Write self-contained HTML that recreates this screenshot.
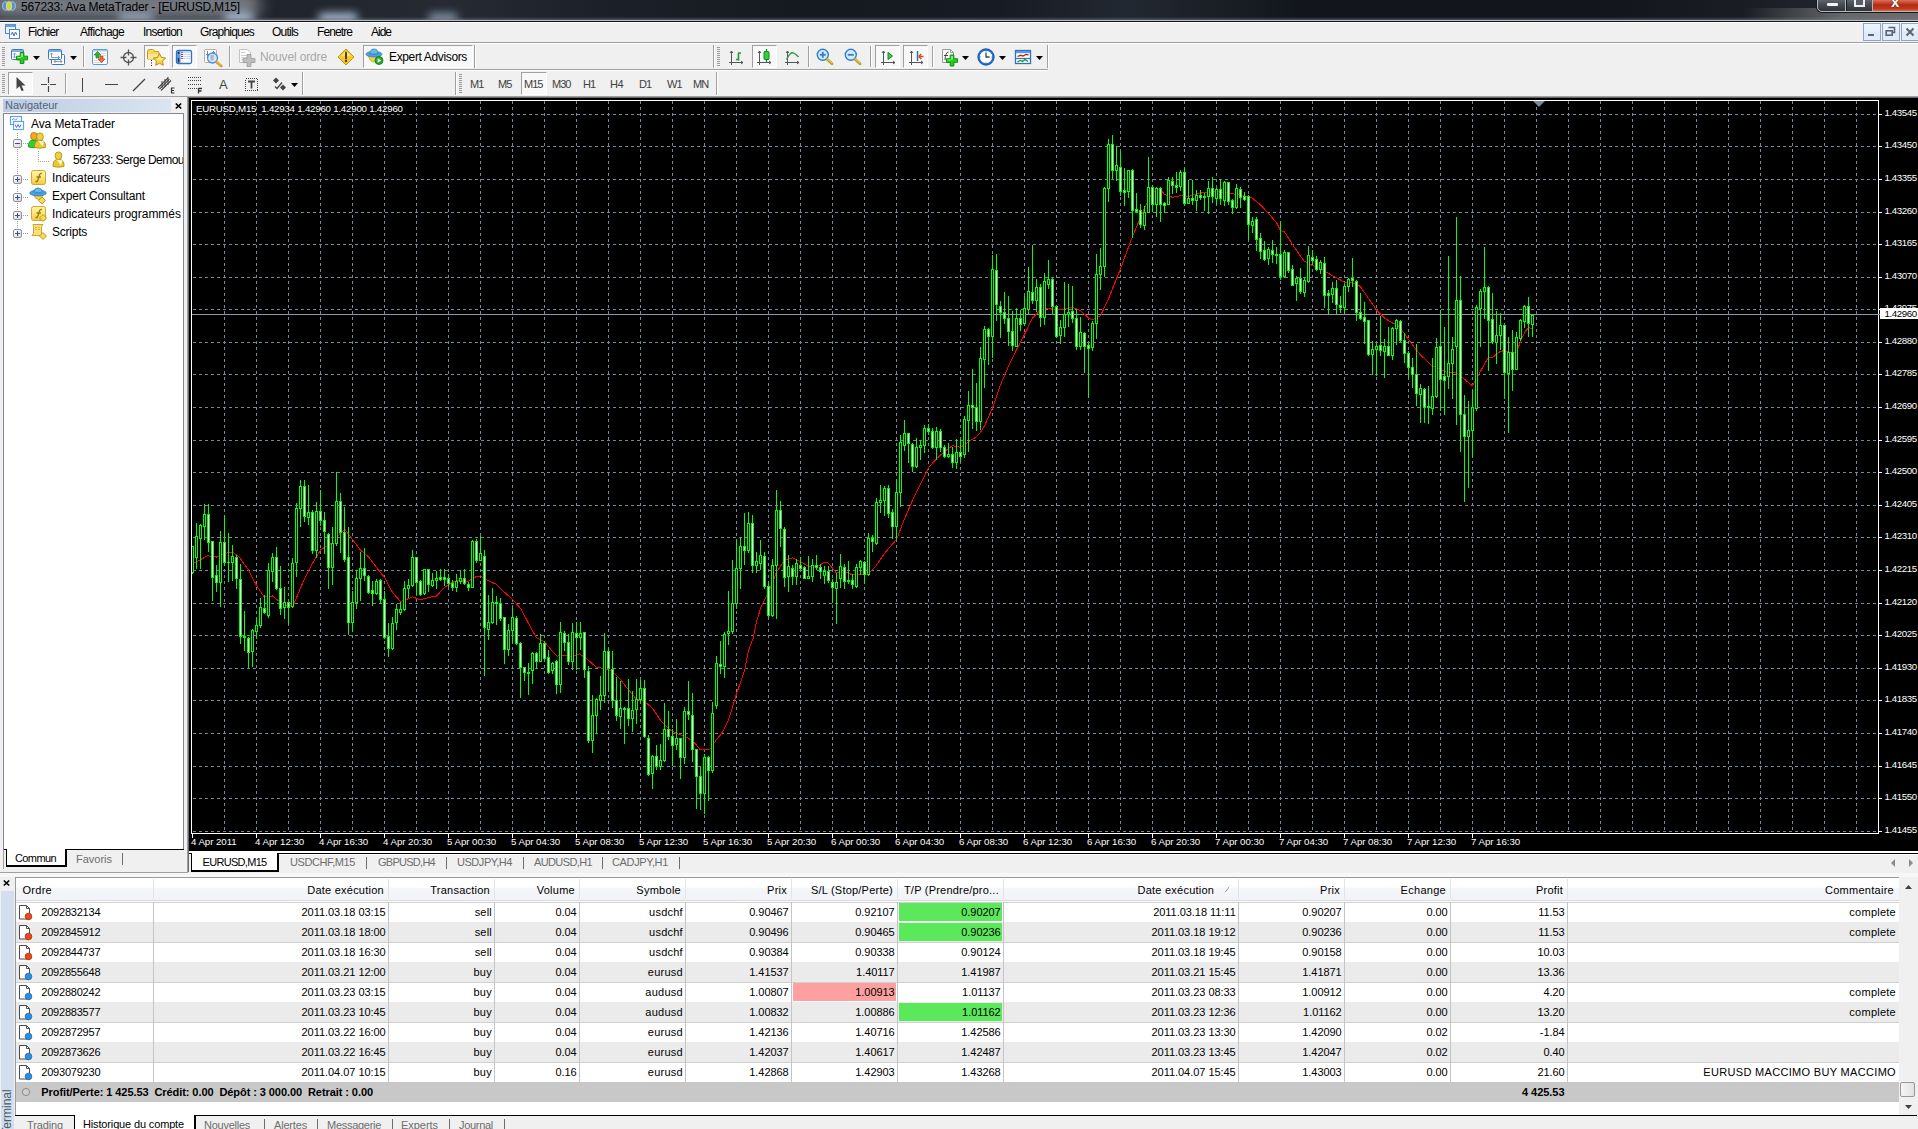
<!DOCTYPE html>
<html><head><meta charset="utf-8"><title>567233: Ava MetaTrader - [EURUSD,M15]</title>
<style>
html,body{margin:0;padding:0;}
body{width:1918px;height:1129px;overflow:hidden;position:relative;background:#f0f0f0;font-family:"Liberation Sans",sans-serif;}
.t{position:absolute;white-space:pre;display:block;}
.r{position:absolute;}
svg{position:absolute;overflow:visible;}
</style></head><body>
<div class="r" style="left:0;top:0;width:1918px;height:20px;background:linear-gradient(90deg,#20242b 0,#20252d 280px,#252a33 450px,#1c2129 600px,#151a21 800px,#171c24 1000px,#222831 1130px,#12161c 1300px,#12151b 1600px,#1a1d23 1750px,#2a2d33 1918px);"></div>
<div class="r" style="left:1700px;top:8px;width:218px;height:12px;background:linear-gradient(100deg,rgba(255,255,255,0) 20%,rgba(255,255,255,.3) 65%,rgba(255,255,255,.3) 100%);"></div>
<div class="r" style="left:-10px;top:-8px;width:270px;height:26px;background:rgba(215,220,228,.5);filter:blur(8px);border-radius:10px;"></div>
<div class="r" style="left:118px;top:13px;width:36px;height:10px;background:rgba(190,215,240,0.6);filter:blur(4px);border-radius:6px;"></div>
<div class="r" style="left:224px;top:13px;width:30px;height:10px;background:rgba(190,215,240,0.8);filter:blur(4px);border-radius:6px;"></div>
<div class="r" style="left:318px;top:13px;width:40px;height:10px;background:rgba(190,215,240,0.85);filter:blur(4px);border-radius:6px;"></div>
<div class="r" style="left:428px;top:13px;width:30px;height:10px;background:rgba(190,215,240,0.6);filter:blur(4px);border-radius:6px;"></div>
<div class="r" style="left:0;top:17px;width:1918px;height:3px;background:linear-gradient(180deg,rgba(90,95,100,0),rgba(120,125,130,.55));"></div>
<div class="r" style="left:0px;top:20px;width:1918px;height:1px;background:#b9bcc0;"></div>
<div class="r" style="left:0px;top:21px;width:1918px;height:1px;background:#14171b;"></div>
<div class="r" style="left:0px;top:22px;width:1918px;height:1px;background:#fff;"></div>
<svg style="left:2px;top:1px" width="14" height="10" viewBox="0 0 18 12" preserveAspectRatio="none"><ellipse cx="5" cy="6" rx="4.2" ry="5" fill="#5b8fc7" stroke="#bcd4ee" stroke-width="1"/><ellipse cx="13" cy="6" rx="4.2" ry="5" fill="#5b8fc7" stroke="#bcd4ee" stroke-width="1"/><ellipse cx="9" cy="6" rx="3.4" ry="5.2" fill="#c9d84a" stroke="#e8f0b0" stroke-width=".8"/></svg>
<span class="t" style="top:-1.2px;line-height:16px;font-size:12px;color:#000;letter-spacing:-0.192px;left:21.0px;">567233: Ava MetaTrader - [EURUSD,M15]</span>
<div class="r" style="left:1817px;top:-6px;width:110px;height:18px;border:1px solid #b4b8bd;box-shadow:0 0 0 1px #16181c;border-radius:0 0 0 5px;background:linear-gradient(180deg,#7b7f86,#4b4f57 55%,#30343b);box-sizing:border-box;"></div>
<div class="r" style="left:1845px;top:0px;width:1px;height:11px;background:#b4b8bd;"></div>
<div class="r" style="left:1846px;top:0px;width:1px;height:11px;background:#16181c;"></div>
<div class="r" style="left:1872px;top:0px;width:1px;height:11px;background:#b4b8bd;"></div>
<div class="r" style="left:1873px;top:0;width:45px;height:11px;background:linear-gradient(180deg,#d9705c,#b42a12 45%,#c03a1c 80%,#d8694a);"></div>
<div class="r" style="left:1827px;top:3px;width:11px;height:3px;background:#f4f4f4;border-radius:1px;"></div>
<div class="r" style="left:1854px;top:-3px;width:7px;height:6px;border:2px solid #f0f0f0;background:#5a5e66;"></div>
<span class="t" style="top:-8.0px;line-height:19px;font-size:15px;color:#fff;font-weight:bold;letter-spacing:1.200px;left:1891.0px;text-shadow:0 0 1px #402018,0 0 1px #402018;">x</span>
<div class="r" style="left:0px;top:23px;width:1918px;height:20px;background:#f0f0f0;"></div>
<div class="r" style="left:0px;top:42px;width:1918px;height:1px;background:#a0a0a0;"></div>
<div class="r" style="left:0px;top:43px;width:1918px;height:1px;background:#ffffff;"></div>
<svg style="left:4px;top:23px" width="17" height="17" viewBox="0 0 17 17"><rect x="1.5" y="1.5" width="10" height="9" fill="#eaf2fb" stroke="#4f86c6"/><rect x="1.5" y="1.5" width="10" height="2.5" fill="#6ea0d8"/><rect x="5.5" y="6.5" width="10" height="9" fill="#fff" stroke="#4f86c6"/><path d="M7 12 l1.5-3 1.5 4 1.5-4 1.5 3" fill="none" stroke="#3a6fb0" stroke-width="1"/></svg>
<span class="t" style="top:23.8px;line-height:16px;font-size:12px;color:#000;letter-spacing:-0.787px;left:28.0px;">Fichier</span>
<span class="t" style="top:23.8px;line-height:16px;font-size:12px;color:#000;letter-spacing:-0.646px;left:80.0px;">Affichage</span>
<span class="t" style="top:23.8px;line-height:16px;font-size:12px;color:#000;letter-spacing:-0.781px;left:143.0px;">Insertion</span>
<span class="t" style="top:23.8px;line-height:16px;font-size:12px;color:#000;letter-spacing:-0.804px;left:200.0px;">Graphiques</span>
<span class="t" style="top:23.8px;line-height:16px;font-size:12px;color:#000;letter-spacing:-0.779px;left:272.0px;">Outils</span>
<span class="t" style="top:23.8px;line-height:16px;font-size:12px;color:#000;letter-spacing:-0.908px;left:317.0px;">Fenetre</span>
<span class="t" style="top:23.8px;line-height:16px;font-size:12px;color:#000;letter-spacing:-1.000px;left:371.0px;">Aide</span>
<div class="r" style="left:1863px;top:23px;width:18px;height:18px;box-sizing:border-box;border:1px solid #8fa6c4;background:linear-gradient(180deg,#ecf4fc 0,#e6f0fa 45%,#dce9f7 50%,#e0ecf9 100%);"></div>
<div class="r" style="left:1882px;top:23px;width:18px;height:18px;box-sizing:border-box;border:1px solid #8fa6c4;background:linear-gradient(180deg,#ecf4fc 0,#e6f0fa 45%,#dce9f7 50%,#e0ecf9 100%);"></div>
<div class="r" style="left:1901px;top:23px;width:18px;height:18px;box-sizing:border-box;border:1px solid #8fa6c4;background:linear-gradient(180deg,#ecf4fc 0,#e6f0fa 45%,#dce9f7 50%,#e0ecf9 100%);"></div>
<div class="r" style="left:1868px;top:34px;width:6px;height:2px;background:#5a6472;"></div>
<svg style="left:1885px;top:26px" width="11" height="11" viewBox="0 0 11 11"><path d="M3.5 1.5h6v5h-2" fill="none" stroke="#5a6472" stroke-width="1.6"/><rect x="1.2" y="4.8" width="6" height="4.4" fill="none" stroke="#5a6472" stroke-width="1.6"/></svg>
<svg style="left:1905px;top:27px" width="10" height="10" viewBox="0 0 10 10"><path d="M1.5 1.5l7 7M8.5 1.5l-7 7" stroke="#5a6472" stroke-width="2"/></svg>
<div class="r" style="left:0px;top:69px;width:1048px;height:1px;background:#a0a0a0;"></div>
<div class="r" style="left:0px;top:70px;width:1049px;height:1px;background:#ffffff;"></div>
<div class="r" style="left:0px;top:96px;width:1918px;height:1px;background:#a0a0a0;"></div>
<div class="r" style="left:2px;top:47px;width:3px;height:1px;background:#9a9a9a;"></div>
<div class="r" style="left:2px;top:49px;width:3px;height:1px;background:#9a9a9a;"></div>
<div class="r" style="left:2px;top:51px;width:3px;height:1px;background:#9a9a9a;"></div>
<div class="r" style="left:2px;top:53px;width:3px;height:1px;background:#9a9a9a;"></div>
<div class="r" style="left:2px;top:55px;width:3px;height:1px;background:#9a9a9a;"></div>
<div class="r" style="left:2px;top:57px;width:3px;height:1px;background:#9a9a9a;"></div>
<div class="r" style="left:2px;top:59px;width:3px;height:1px;background:#9a9a9a;"></div>
<div class="r" style="left:2px;top:61px;width:3px;height:1px;background:#9a9a9a;"></div>
<div class="r" style="left:2px;top:63px;width:3px;height:1px;background:#9a9a9a;"></div>
<div class="r" style="left:2px;top:65px;width:3px;height:1px;background:#9a9a9a;"></div>
<div class="r" style="left:717px;top:47px;width:3px;height:1px;background:#9a9a9a;"></div>
<div class="r" style="left:717px;top:49px;width:3px;height:1px;background:#9a9a9a;"></div>
<div class="r" style="left:717px;top:51px;width:3px;height:1px;background:#9a9a9a;"></div>
<div class="r" style="left:717px;top:53px;width:3px;height:1px;background:#9a9a9a;"></div>
<div class="r" style="left:717px;top:55px;width:3px;height:1px;background:#9a9a9a;"></div>
<div class="r" style="left:717px;top:57px;width:3px;height:1px;background:#9a9a9a;"></div>
<div class="r" style="left:717px;top:59px;width:3px;height:1px;background:#9a9a9a;"></div>
<div class="r" style="left:717px;top:61px;width:3px;height:1px;background:#9a9a9a;"></div>
<div class="r" style="left:717px;top:63px;width:3px;height:1px;background:#9a9a9a;"></div>
<div class="r" style="left:717px;top:65px;width:3px;height:1px;background:#9a9a9a;"></div>
<div class="r" style="left:83px;top:46px;width:1px;height:21px;background:#a0a0a0;"></div>
<div class="r" style="left:84px;top:46px;width:1px;height:21px;background:#ffffff;"></div>
<div class="r" style="left:229px;top:46px;width:1px;height:21px;background:#a0a0a0;"></div>
<div class="r" style="left:230px;top:46px;width:1px;height:21px;background:#ffffff;"></div>
<div class="r" style="left:474px;top:45px;width:1px;height:23px;background:#a0a0a0;"></div>
<div class="r" style="left:475px;top:45px;width:1px;height:23px;background:#ffffff;"></div>
<div class="r" style="left:713px;top:45px;width:1px;height:23px;background:#a0a0a0;"></div>
<div class="r" style="left:714px;top:45px;width:1px;height:23px;background:#ffffff;"></div>
<div class="r" style="left:808px;top:46px;width:1px;height:21px;background:#a0a0a0;"></div>
<div class="r" style="left:809px;top:46px;width:1px;height:21px;background:#ffffff;"></div>
<div class="r" style="left:870px;top:46px;width:1px;height:21px;background:#a0a0a0;"></div>
<div class="r" style="left:871px;top:46px;width:1px;height:21px;background:#ffffff;"></div>
<div class="r" style="left:932px;top:46px;width:1px;height:21px;background:#a0a0a0;"></div>
<div class="r" style="left:933px;top:46px;width:1px;height:21px;background:#ffffff;"></div>
<div class="r" style="left:1047px;top:45px;width:1px;height:23px;background:#a0a0a0;"></div>
<div class="r" style="left:1048px;top:45px;width:1px;height:23px;background:#ffffff;"></div>
<div class="r" style="left:144px;top:45px;width:25px;height:23px;box-sizing:border-box;background:#f8f8f8;border:1px solid;border-color:#a0a0a0 #fff #fff #a0a0a0;"></div>
<div class="r" style="left:172px;top:45px;width:25px;height:23px;box-sizing:border-box;background:#f8f8f8;border:1px solid;border-color:#a0a0a0 #fff #fff #a0a0a0;"></div>
<div class="r" style="left:363px;top:45px;width:110px;height:23px;box-sizing:border-box;background:#f8f8f8;border:1px solid;border-color:#a0a0a0 #fff #fff #a0a0a0;"></div>
<div class="r" style="left:752px;top:45px;width:25px;height:23px;box-sizing:border-box;background:#f8f8f8;border:1px solid;border-color:#a0a0a0 #fff #fff #a0a0a0;"></div>
<div class="r" style="left:875px;top:45px;width:25px;height:23px;box-sizing:border-box;background:#f8f8f8;border:1px solid;border-color:#a0a0a0 #fff #fff #a0a0a0;"></div>
<div class="r" style="left:903px;top:45px;width:25px;height:23px;box-sizing:border-box;background:#f8f8f8;border:1px solid;border-color:#a0a0a0 #fff #fff #a0a0a0;"></div>
<svg style="left:33px;top:56px" width="7" height="4" viewBox="0 0 7 4"><path d="M0 0h7l-3.5 4z" fill="#000"/></svg>
<svg style="left:70px;top:56px" width="7" height="4" viewBox="0 0 7 4"><path d="M0 0h7l-3.5 4z" fill="#000"/></svg>
<svg style="left:962px;top:56px" width="7" height="4" viewBox="0 0 7 4"><path d="M0 0h7l-3.5 4z" fill="#000"/></svg>
<svg style="left:999px;top:56px" width="7" height="4" viewBox="0 0 7 4"><path d="M0 0h7l-3.5 4z" fill="#000"/></svg>
<svg style="left:1036px;top:56px" width="7" height="4" viewBox="0 0 7 4"><path d="M0 0h7l-3.5 4z" fill="#000"/></svg>
<span class="t" style="top:49.0px;line-height:16px;font-size:12px;color:#a8a8a8;letter-spacing:-0.142px;left:260.0px;">Nouvel ordre</span>
<span class="t" style="top:49.0px;line-height:16px;font-size:12px;color:#000;letter-spacing:-0.358px;left:389.0px;">Expert Advisors</span>
<div class="r" style="left:2px;top:74px;width:3px;height:1px;background:#9a9a9a;"></div>
<div class="r" style="left:2px;top:76px;width:3px;height:1px;background:#9a9a9a;"></div>
<div class="r" style="left:2px;top:78px;width:3px;height:1px;background:#9a9a9a;"></div>
<div class="r" style="left:2px;top:80px;width:3px;height:1px;background:#9a9a9a;"></div>
<div class="r" style="left:2px;top:82px;width:3px;height:1px;background:#9a9a9a;"></div>
<div class="r" style="left:2px;top:84px;width:3px;height:1px;background:#9a9a9a;"></div>
<div class="r" style="left:2px;top:86px;width:3px;height:1px;background:#9a9a9a;"></div>
<div class="r" style="left:2px;top:88px;width:3px;height:1px;background:#9a9a9a;"></div>
<div class="r" style="left:2px;top:90px;width:3px;height:1px;background:#9a9a9a;"></div>
<div class="r" style="left:2px;top:92px;width:3px;height:1px;background:#9a9a9a;"></div>
<div class="r" style="left:459px;top:74px;width:3px;height:1px;background:#9a9a9a;"></div>
<div class="r" style="left:459px;top:76px;width:3px;height:1px;background:#9a9a9a;"></div>
<div class="r" style="left:459px;top:78px;width:3px;height:1px;background:#9a9a9a;"></div>
<div class="r" style="left:459px;top:80px;width:3px;height:1px;background:#9a9a9a;"></div>
<div class="r" style="left:459px;top:82px;width:3px;height:1px;background:#9a9a9a;"></div>
<div class="r" style="left:459px;top:84px;width:3px;height:1px;background:#9a9a9a;"></div>
<div class="r" style="left:459px;top:86px;width:3px;height:1px;background:#9a9a9a;"></div>
<div class="r" style="left:459px;top:88px;width:3px;height:1px;background:#9a9a9a;"></div>
<div class="r" style="left:459px;top:90px;width:3px;height:1px;background:#9a9a9a;"></div>
<div class="r" style="left:459px;top:92px;width:3px;height:1px;background:#9a9a9a;"></div>
<div class="r" style="left:65px;top:73px;width:1px;height:21px;background:#a0a0a0;"></div>
<div class="r" style="left:66px;top:73px;width:1px;height:21px;background:#ffffff;"></div>
<div class="r" style="left:302px;top:72px;width:1px;height:23px;background:#a0a0a0;"></div>
<div class="r" style="left:303px;top:72px;width:1px;height:23px;background:#ffffff;"></div>
<div class="r" style="left:455px;top:72px;width:1px;height:23px;background:#a0a0a0;"></div>
<div class="r" style="left:456px;top:72px;width:1px;height:23px;background:#ffffff;"></div>
<div class="r" style="left:716px;top:72px;width:1px;height:23px;background:#a0a0a0;"></div>
<div class="r" style="left:717px;top:72px;width:1px;height:23px;background:#ffffff;"></div>
<div class="r" style="left:8px;top:72px;width:25px;height:23px;box-sizing:border-box;background:#f8f8f8;border:1px solid;border-color:#a0a0a0 #fff #fff #a0a0a0;"></div>
<div class="r" style="left:521px;top:72px;width:26px;height:23px;box-sizing:border-box;background:#f8f8f8;border:1px solid;border-color:#a0a0a0 #fff #fff #a0a0a0;"></div>
<svg style="left:291px;top:83px" width="7" height="4" viewBox="0 0 7 4"><path d="M0 0h7l-3.5 4z" fill="#000"/></svg>
<span class="t" style="top:77.0px;line-height:15px;font-size:11px;color:#404040;letter-spacing:-1.000px;left:470.0px;">M1</span>
<span class="t" style="top:77.0px;line-height:15px;font-size:11px;color:#404040;letter-spacing:-1.000px;left:498.0px;">M5</span>
<span class="t" style="top:77.0px;line-height:15px;font-size:11px;color:#404040;letter-spacing:-1.000px;left:524.0px;">M15</span>
<span class="t" style="top:77.0px;line-height:15px;font-size:11px;color:#404040;letter-spacing:-1.000px;left:552.0px;">M30</span>
<span class="t" style="top:77.0px;line-height:15px;font-size:11px;color:#404040;letter-spacing:-1.000px;left:583.0px;">H1</span>
<span class="t" style="top:77.0px;line-height:15px;font-size:11px;color:#404040;letter-spacing:-0.531px;left:610.0px;">H4</span>
<span class="t" style="top:77.0px;line-height:15px;font-size:11px;color:#404040;letter-spacing:-1.000px;left:639.0px;">D1</span>
<span class="t" style="top:77.0px;line-height:15px;font-size:11px;color:#404040;letter-spacing:-1.000px;left:667.0px;">W1</span>
<span class="t" style="top:77.0px;line-height:15px;font-size:11px;color:#404040;letter-spacing:-1.000px;left:693.0px;">MN</span>
<div class="r" style="left:0px;top:97px;width:188px;height:775px;background:#f0f0f0;"></div>
<div class="r" style="left:3px;top:99px;width:168px;height:13px;background:linear-gradient(90deg,#bccce1,#dbe5f1);"></div>
<span class="t" style="top:97.8px;line-height:15px;font-size:11px;color:#55647a;letter-spacing:-0.020px;left:5.0px;">Navigateur</span>
<svg style="left:175px;top:103px" width="7" height="6" viewBox="0 0 7 6"><path d="M.8 .5l5.4 5M6.2 .5l-5.4 5" stroke="#000" stroke-width="1.7"/></svg>
<div class="r" style="left:3px;top:113px;width:181px;height:737px;box-sizing:border-box;background:#fff;border:1px solid #828790;border-bottom:none;"></div>
<div class="r" style="left:17px;top:133px;width:1px;height:96px;background:repeating-linear-gradient(180deg,#a0a0a0 0 1px,transparent 1px 2px);"></div>
<div class="r" style="left:38px;top:151px;width:1px;height:10px;background:repeating-linear-gradient(180deg,#a0a0a0 0 1px,transparent 1px 2px);"></div>
<div class="r" style="left:23px;top:143px;width:5px;height:1px;background:repeating-linear-gradient(90deg,#a0a0a0 0 1px,transparent 1px 2px);"></div>
<div class="r" style="left:38px;top:161px;width:11px;height:1px;background:repeating-linear-gradient(90deg,#a0a0a0 0 1px,transparent 1px 2px);"></div>
<div class="r" style="left:23px;top:179px;width:5px;height:1px;background:repeating-linear-gradient(90deg,#a0a0a0 0 1px,transparent 1px 2px);"></div>
<div class="r" style="left:23px;top:197px;width:5px;height:1px;background:repeating-linear-gradient(90deg,#a0a0a0 0 1px,transparent 1px 2px);"></div>
<div class="r" style="left:23px;top:215px;width:5px;height:1px;background:repeating-linear-gradient(90deg,#a0a0a0 0 1px,transparent 1px 2px);"></div>
<div class="r" style="left:23px;top:233px;width:5px;height:1px;background:repeating-linear-gradient(90deg,#a0a0a0 0 1px,transparent 1px 2px);"></div>
<div class="r" style="left:13px;top:139px;width:9px;height:9px;box-sizing:border-box;border:1px solid #919191;border-radius:2px;background:linear-gradient(135deg,#fff,#d8d8d8);"></div>
<div class="r" style="left:15px;top:143px;width:5px;height:1px;background:#3a4ea0;"></div>
<div class="r" style="left:13px;top:175px;width:9px;height:9px;box-sizing:border-box;border:1px solid #919191;border-radius:2px;background:linear-gradient(135deg,#fff,#d8d8d8);"></div>
<div class="r" style="left:15px;top:179px;width:5px;height:1px;background:#3a4ea0;"></div>
<div class="r" style="left:17px;top:177px;width:1px;height:5px;background:#3a4ea0;"></div>
<div class="r" style="left:13px;top:193px;width:9px;height:9px;box-sizing:border-box;border:1px solid #919191;border-radius:2px;background:linear-gradient(135deg,#fff,#d8d8d8);"></div>
<div class="r" style="left:15px;top:197px;width:5px;height:1px;background:#3a4ea0;"></div>
<div class="r" style="left:17px;top:195px;width:1px;height:5px;background:#3a4ea0;"></div>
<div class="r" style="left:13px;top:211px;width:9px;height:9px;box-sizing:border-box;border:1px solid #919191;border-radius:2px;background:linear-gradient(135deg,#fff,#d8d8d8);"></div>
<div class="r" style="left:15px;top:215px;width:5px;height:1px;background:#3a4ea0;"></div>
<div class="r" style="left:17px;top:213px;width:1px;height:5px;background:#3a4ea0;"></div>
<div class="r" style="left:13px;top:229px;width:9px;height:9px;box-sizing:border-box;border:1px solid #919191;border-radius:2px;background:linear-gradient(135deg,#fff,#d8d8d8);"></div>
<div class="r" style="left:15px;top:233px;width:5px;height:1px;background:#3a4ea0;"></div>
<div class="r" style="left:17px;top:231px;width:1px;height:5px;background:#3a4ea0;"></div>
<span class="t" style="top:116.0px;line-height:16px;font-size:12px;color:#000;letter-spacing:-0.098px;left:31.0px;">Ava MetaTrader</span>
<span class="t" style="top:134.0px;line-height:16px;font-size:12px;color:#000;left:52.0px;">Comptes</span>
<span class="t" style="top:152.0px;line-height:16px;font-size:12px;color:#000;letter-spacing:-0.513px;left:73.0px;">567233: Serge Demou</span>
<span class="t" style="top:170.0px;line-height:16px;font-size:12px;color:#000;letter-spacing:-0.064px;left:52.0px;">Indicateurs</span>
<span class="t" style="top:188.0px;line-height:16px;font-size:12px;color:#000;letter-spacing:-0.140px;left:52.0px;">Expert Consultant</span>
<span class="t" style="top:206.0px;line-height:16px;font-size:12px;color:#000;letter-spacing:-0.018px;left:52.0px;">Indicateurs programmés</span>
<span class="t" style="top:224.0px;line-height:16px;font-size:12px;color:#000;letter-spacing:-0.239px;left:52.0px;">Scripts</span>
<div class="r" style="left:183px;top:150px;width:1px;height:20px;background:#828790;"></div>
<div class="r" style="left:184px;top:150px;width:4px;height:20px;background:#f0f0f0;"></div>
<div class="r" style="left:4px;top:849px;width:180px;height:1px;background:#000;"></div>
<div class="r" style="left:6px;top:849px;width:61px;height:18px;box-sizing:border-box;background:#fff;border:1px solid #000;border-top:none;border-right-width:2px;border-bottom-width:2px;"></div>
<div class="r" style="left:7px;top:849px;width:58px;height:1px;background:#fff;"></div>
<span class="t" style="top:851.0px;line-height:15px;font-size:11px;color:#000;letter-spacing:-0.604px;left:15.0px;">Commun</span>
<span class="t" style="top:851.8px;line-height:15px;font-size:11px;color:#6d6d6d;letter-spacing:-0.009px;left:76.0px;">Favoris</span>
<div class="r" style="left:122px;top:853px;width:1px;height:12px;background:#6d6d6d;"></div>
<div class="r" style="left:0px;top:872px;width:188px;height:1px;background:#a0a0a0;"></div>
<div class="r" style="left:0px;top:873px;width:188px;height:1px;background:#fff;"></div>
<div class="r" style="left:184px;top:97px;width:3px;height:775px;background:#f0f0f0;"></div>
<div class="r" style="left:187px;top:97px;width:1731px;height:757px;background:#a0a0a0;"></div>
<div class="r" style="left:188px;top:97px;width:1730px;height:757px;background:#696969;"></div>
<div class="r" style="left:187px;top:97px;width:1px;height:775px;background:#a0a0a0;"></div>
<div class="r" style="left:188px;top:97px;width:1px;height:775px;background:#696969;"></div>
<div class="r" style="left:3px;top:850px;width:1px;height:19px;background:#a0a0a0;"></div>
<div class="r" style="left:189px;top:98px;width:1729px;height:753px;background:#000;"></div>
<div class="r" style="left:189px;top:851px;width:1729px;height:2px;background:#fff;"></div>
<div class="r" style="left:189px;top:853px;width:1729px;height:1px;background:#000;"></div>
<div class="r" style="left:189px;top:854px;width:1729px;height:1px;background:#fff;"></div>
<div class="r" style="left:189px;top:873px;width:1729px;height:4px;background:#fafafa;"></div>
<svg style="left:0;top:0" width="1918" height="1129" viewBox="0 0 1918 1129" shape-rendering="crispEdges"><path d="M193 114.5H1878" stroke="#778899" stroke-width="1" stroke-dasharray="3 3" fill="none"/><path d="M193 146.5H1878" stroke="#778899" stroke-width="1" stroke-dasharray="3 3" fill="none"/><path d="M193 179.5H1878" stroke="#778899" stroke-width="1" stroke-dasharray="3 3" fill="none"/><path d="M193 212.5H1878" stroke="#778899" stroke-width="1" stroke-dasharray="3 3" fill="none"/><path d="M193 244.5H1878" stroke="#778899" stroke-width="1" stroke-dasharray="3 3" fill="none"/><path d="M193 277.5H1878" stroke="#778899" stroke-width="1" stroke-dasharray="3 3" fill="none"/><path d="M193 309.5H1878" stroke="#778899" stroke-width="1" stroke-dasharray="3 3" fill="none"/><path d="M193 342.5H1878" stroke="#778899" stroke-width="1" stroke-dasharray="3 3" fill="none"/><path d="M193 374.5H1878" stroke="#778899" stroke-width="1" stroke-dasharray="3 3" fill="none"/><path d="M193 407.5H1878" stroke="#778899" stroke-width="1" stroke-dasharray="3 3" fill="none"/><path d="M193 440.5H1878" stroke="#778899" stroke-width="1" stroke-dasharray="3 3" fill="none"/><path d="M193 472.5H1878" stroke="#778899" stroke-width="1" stroke-dasharray="3 3" fill="none"/><path d="M193 505.5H1878" stroke="#778899" stroke-width="1" stroke-dasharray="3 3" fill="none"/><path d="M193 537.5H1878" stroke="#778899" stroke-width="1" stroke-dasharray="3 3" fill="none"/><path d="M193 570.5H1878" stroke="#778899" stroke-width="1" stroke-dasharray="3 3" fill="none"/><path d="M193 603.5H1878" stroke="#778899" stroke-width="1" stroke-dasharray="3 3" fill="none"/><path d="M193 635.5H1878" stroke="#778899" stroke-width="1" stroke-dasharray="3 3" fill="none"/><path d="M193 668.5H1878" stroke="#778899" stroke-width="1" stroke-dasharray="3 3" fill="none"/><path d="M193 700.5H1878" stroke="#778899" stroke-width="1" stroke-dasharray="3 3" fill="none"/><path d="M193 733.5H1878" stroke="#778899" stroke-width="1" stroke-dasharray="3 3" fill="none"/><path d="M193 766.5H1878" stroke="#778899" stroke-width="1" stroke-dasharray="3 3" fill="none"/><path d="M193 798.5H1878" stroke="#778899" stroke-width="1" stroke-dasharray="3 3" fill="none"/><path d="M193 831.5H1878" stroke="#778899" stroke-width="1" stroke-dasharray="3 3" fill="none"/><path d="M224.5 101V833" stroke="#778899" stroke-width="1" stroke-dasharray="3 3" fill="none"/><path d="M256.5 101V833" stroke="#778899" stroke-width="1" stroke-dasharray="3 3" fill="none"/><path d="M288.5 101V833" stroke="#778899" stroke-width="1" stroke-dasharray="3 3" fill="none"/><path d="M320.5 101V833" stroke="#778899" stroke-width="1" stroke-dasharray="3 3" fill="none"/><path d="M352.5 101V833" stroke="#778899" stroke-width="1" stroke-dasharray="3 3" fill="none"/><path d="M384.5 101V833" stroke="#778899" stroke-width="1" stroke-dasharray="3 3" fill="none"/><path d="M416.5 101V833" stroke="#778899" stroke-width="1" stroke-dasharray="3 3" fill="none"/><path d="M448.5 101V833" stroke="#778899" stroke-width="1" stroke-dasharray="3 3" fill="none"/><path d="M480.5 101V833" stroke="#778899" stroke-width="1" stroke-dasharray="3 3" fill="none"/><path d="M512.5 101V833" stroke="#778899" stroke-width="1" stroke-dasharray="3 3" fill="none"/><path d="M544.5 101V833" stroke="#778899" stroke-width="1" stroke-dasharray="3 3" fill="none"/><path d="M576.5 101V833" stroke="#778899" stroke-width="1" stroke-dasharray="3 3" fill="none"/><path d="M608.5 101V833" stroke="#778899" stroke-width="1" stroke-dasharray="3 3" fill="none"/><path d="M640.5 101V833" stroke="#778899" stroke-width="1" stroke-dasharray="3 3" fill="none"/><path d="M672.5 101V833" stroke="#778899" stroke-width="1" stroke-dasharray="3 3" fill="none"/><path d="M704.5 101V833" stroke="#778899" stroke-width="1" stroke-dasharray="3 3" fill="none"/><path d="M736.5 101V833" stroke="#778899" stroke-width="1" stroke-dasharray="3 3" fill="none"/><path d="M768.5 101V833" stroke="#778899" stroke-width="1" stroke-dasharray="3 3" fill="none"/><path d="M800.5 101V833" stroke="#778899" stroke-width="1" stroke-dasharray="3 3" fill="none"/><path d="M832.5 101V833" stroke="#778899" stroke-width="1" stroke-dasharray="3 3" fill="none"/><path d="M864.5 101V833" stroke="#778899" stroke-width="1" stroke-dasharray="3 3" fill="none"/><path d="M896.5 101V833" stroke="#778899" stroke-width="1" stroke-dasharray="3 3" fill="none"/><path d="M928.5 101V833" stroke="#778899" stroke-width="1" stroke-dasharray="3 3" fill="none"/><path d="M960.5 101V833" stroke="#778899" stroke-width="1" stroke-dasharray="3 3" fill="none"/><path d="M992.5 101V833" stroke="#778899" stroke-width="1" stroke-dasharray="3 3" fill="none"/><path d="M1024.5 101V833" stroke="#778899" stroke-width="1" stroke-dasharray="3 3" fill="none"/><path d="M1056.5 101V833" stroke="#778899" stroke-width="1" stroke-dasharray="3 3" fill="none"/><path d="M1088.5 101V833" stroke="#778899" stroke-width="1" stroke-dasharray="3 3" fill="none"/><path d="M1120.5 101V833" stroke="#778899" stroke-width="1" stroke-dasharray="3 3" fill="none"/><path d="M1152.5 101V833" stroke="#778899" stroke-width="1" stroke-dasharray="3 3" fill="none"/><path d="M1184.5 101V833" stroke="#778899" stroke-width="1" stroke-dasharray="3 3" fill="none"/><path d="M1216.5 101V833" stroke="#778899" stroke-width="1" stroke-dasharray="3 3" fill="none"/><path d="M1248.5 101V833" stroke="#778899" stroke-width="1" stroke-dasharray="3 3" fill="none"/><path d="M1280.5 101V833" stroke="#778899" stroke-width="1" stroke-dasharray="3 3" fill="none"/><path d="M1312.5 101V833" stroke="#778899" stroke-width="1" stroke-dasharray="3 3" fill="none"/><path d="M1344.5 101V833" stroke="#778899" stroke-width="1" stroke-dasharray="3 3" fill="none"/><path d="M1376.5 101V833" stroke="#778899" stroke-width="1" stroke-dasharray="3 3" fill="none"/><path d="M1408.5 101V833" stroke="#778899" stroke-width="1" stroke-dasharray="3 3" fill="none"/><path d="M1440.5 101V833" stroke="#778899" stroke-width="1" stroke-dasharray="3 3" fill="none"/><path d="M1472.5 101V833" stroke="#778899" stroke-width="1" stroke-dasharray="3 3" fill="none"/><path d="M1504.5 101V833" stroke="#778899" stroke-width="1" stroke-dasharray="3 3" fill="none"/><path d="M1536.5 101V833" stroke="#778899" stroke-width="1" stroke-dasharray="3 3" fill="none"/><path d="M1568.5 101V833" stroke="#778899" stroke-width="1" stroke-dasharray="3 3" fill="none"/><path d="M1600.5 101V833" stroke="#778899" stroke-width="1" stroke-dasharray="3 3" fill="none"/><path d="M1632.5 101V833" stroke="#778899" stroke-width="1" stroke-dasharray="3 3" fill="none"/><path d="M1664.5 101V833" stroke="#778899" stroke-width="1" stroke-dasharray="3 3" fill="none"/><path d="M1696.5 101V833" stroke="#778899" stroke-width="1" stroke-dasharray="3 3" fill="none"/><path d="M1728.5 101V833" stroke="#778899" stroke-width="1" stroke-dasharray="3 3" fill="none"/><path d="M1760.5 101V833" stroke="#778899" stroke-width="1" stroke-dasharray="3 3" fill="none"/><path d="M1792.5 101V833" stroke="#778899" stroke-width="1" stroke-dasharray="3 3" fill="none"/><path d="M1824.5 101V833" stroke="#778899" stroke-width="1" stroke-dasharray="3 3" fill="none"/><path d="M1856.5 101V833" stroke="#778899" stroke-width="1" stroke-dasharray="3 3" fill="none"/><path d="M191.5 833.5V100.5H1878.5V833.5H191.5" stroke="#fff" stroke-width="1" fill="none"/><path d="M1879 114.5h3" stroke="#fff" stroke-width="1"/><path d="M1879 146.5h3" stroke="#fff" stroke-width="1"/><path d="M1879 179.5h3" stroke="#fff" stroke-width="1"/><path d="M1879 212.5h3" stroke="#fff" stroke-width="1"/><path d="M1879 244.5h3" stroke="#fff" stroke-width="1"/><path d="M1879 277.5h3" stroke="#fff" stroke-width="1"/><path d="M1879 309.5h3" stroke="#fff" stroke-width="1"/><path d="M1879 342.5h3" stroke="#fff" stroke-width="1"/><path d="M1879 374.5h3" stroke="#fff" stroke-width="1"/><path d="M1879 407.5h3" stroke="#fff" stroke-width="1"/><path d="M1879 440.5h3" stroke="#fff" stroke-width="1"/><path d="M1879 472.5h3" stroke="#fff" stroke-width="1"/><path d="M1879 505.5h3" stroke="#fff" stroke-width="1"/><path d="M1879 537.5h3" stroke="#fff" stroke-width="1"/><path d="M1879 570.5h3" stroke="#fff" stroke-width="1"/><path d="M1879 603.5h3" stroke="#fff" stroke-width="1"/><path d="M1879 635.5h3" stroke="#fff" stroke-width="1"/><path d="M1879 668.5h3" stroke="#fff" stroke-width="1"/><path d="M1879 700.5h3" stroke="#fff" stroke-width="1"/><path d="M1879 733.5h3" stroke="#fff" stroke-width="1"/><path d="M1879 766.5h3" stroke="#fff" stroke-width="1"/><path d="M1879 798.5h3" stroke="#fff" stroke-width="1"/><path d="M1879 831.5h3" stroke="#fff" stroke-width="1"/><path d="M192.5 834v4" stroke="#fff" stroke-width="1"/><path d="M256.5 834v4" stroke="#fff" stroke-width="1"/><path d="M320.5 834v4" stroke="#fff" stroke-width="1"/><path d="M384.5 834v4" stroke="#fff" stroke-width="1"/><path d="M448.5 834v4" stroke="#fff" stroke-width="1"/><path d="M512.5 834v4" stroke="#fff" stroke-width="1"/><path d="M576.5 834v4" stroke="#fff" stroke-width="1"/><path d="M640.5 834v4" stroke="#fff" stroke-width="1"/><path d="M704.5 834v4" stroke="#fff" stroke-width="1"/><path d="M768.5 834v4" stroke="#fff" stroke-width="1"/><path d="M832.5 834v4" stroke="#fff" stroke-width="1"/><path d="M896.5 834v4" stroke="#fff" stroke-width="1"/><path d="M960.5 834v4" stroke="#fff" stroke-width="1"/><path d="M1024.5 834v4" stroke="#fff" stroke-width="1"/><path d="M1088.5 834v4" stroke="#fff" stroke-width="1"/><path d="M1152.5 834v4" stroke="#fff" stroke-width="1"/><path d="M1216.5 834v4" stroke="#fff" stroke-width="1"/><path d="M1280.5 834v4" stroke="#fff" stroke-width="1"/><path d="M1344.5 834v4" stroke="#fff" stroke-width="1"/><path d="M1408.5 834v4" stroke="#fff" stroke-width="1"/><path d="M1472.5 834v4" stroke="#fff" stroke-width="1"/><path d="M192 314.5H1880" stroke="#8a98a8" stroke-width="1"/><path d="M1533 101h12l-6 6z" fill="#778899" shape-rendering="auto"/><polyline points="194.2,562.8 200.4,559.7 207.5,555.7 216.3,557.1 224.5,553.5 232.4,552.1 238.5,556.2 248.2,569.5 256.5,585.4 264.1,596.9 272.5,596.0 280.4,602.2 288.6,606.7 294.3,603.1 303.1,581.9 312.5,563.3 320.5,550.0 324.5,547.3 332.5,542.9 340.4,533.2 345.2,529.6 352.5,539.4 360.4,550.0 368.6,557.1 376.6,567.7 384.5,577.4 392.5,592.5 400.5,601.4 408.4,598.7 412.5,596.9 420.5,599.9 428.4,597.5 436.6,596.0 444.6,587.2 451.6,582.8 456.4,580.8 468.4,581.2 476.4,576.4 480.5,575.9 488.4,580.8 496.6,584.4 504.6,592.3 512.5,599.4 520.5,608.3 528.5,623.3 536.4,637.9 544.6,641.9 552.6,651.7 557.3,656.1 564.6,655.2 572.6,656.6 579.6,653.8 588.5,660.3 596.4,667.4 604.4,668.4 612.5,671.5 620.5,679.6 628.4,689.8 636.4,699.0 644.5,701.6 652.5,708.2 660.6,720.4 668.6,728.9 676.5,733.6 684.7,736.3 692.6,740.7 700.5,749.9 704.6,749.9 708.1,749.9 710.3,748.9 716.4,739.7 721.5,733.6 728.4,720.4 736.5,693.9 744.9,669.4 748.5,650.0 753.0,638.9 756.5,621.7 761.2,606.3 764.4,600.4 772.4,583.6 776.5,572.1 784.4,560.6 792.6,557.9 800.6,561.8 808.5,566.4 816.5,566.8 824.5,562.3 828.4,563.2 836.5,573.0 844.5,571.7 852.4,574.7 860.6,574.7 868.4,573.9 875.6,566.4 884.4,553.5 896.5,539.5 904.5,519.0 912.5,500.4 920.5,483.7 928.5,467.9 936.5,458.6 944.4,451.7 952.4,445.6 960.4,447.4 968.4,441.9 976.4,436.8 980.0,433.1 984.4,426.0 992.4,408.3 1000.4,385.1 1008.4,366.5 1016.4,349.7 1024.4,334.9 1032.4,318.1 1040.4,310.3 1048.4,308.5 1056.4,309.8 1064.4,309.2 1072.0,307.3 1080.6,310.5 1088.5,318.0 1092.5,319.7 1100.4,316.0 1108.6,298.6 1120.5,268.8 1132.4,236.6 1144.6,208.1 1152.5,192.0 1160.4,189.0 1164.4,194.4 1172.6,197.4 1180.0,195.7 1188.5,196.4 1196.4,193.9 1204.4,192.5 1212.4,192.1 1220.5,191.6 1228.5,193.4 1236.5,194.3 1244.4,195.7 1252.6,198.2 1260.4,204.9 1268.5,213.4 1276.5,222.6 1280.6,230.6 1284.4,231.8 1292.6,244.7 1300.6,256.3 1304.4,261.6 1307.6,262.4 1312.4,265.5 1320.4,268.1 1328.3,273.3 1336.3,277.8 1344.3,282.1 1352.3,282.5 1360.3,286.4 1368.3,298.1 1376.5,309.8 1384.5,318.1 1392.5,323.0 1396.4,323.4 1404.3,333.7 1412.3,344.5 1420.5,355.2 1424.5,358.6 1432.0,365.9 1440.4,369.2 1448.4,373.0 1456.4,372.4 1464.4,379.1 1472.3,385.7 1476.3,379.1 1484.3,364.4 1488.3,357.8 1492.6,357.6 1495.5,355.1 1500.6,351.2 1504.6,350.8 1512.6,353.1 1516.7,351.8 1520.6,341.1 1524.7,332.3 1528.6,327.4 1532.7,329.4" stroke="#ff0000" stroke-width="1" fill="none" shape-rendering="crispEdges"/><path d="M192.5 546V574M196.5 523V569M200.5 524V569M204.5 504V540M208.5 504V552M212.5 541V601M216.5 565V592M220.5 531V607M224.5 515V566M228.5 533V582M232.5 545V581M236.5 555V589M240.5 564V644M244.5 611V651M248.5 637V668M252.5 629V667M256.5 618V639M260.5 598V628M264.5 595V614M268.5 563V618M272.5 553V582M276.5 547V590M280.5 566V615M284.5 587V619M288.5 602V624M292.5 558V608M296.5 503V577M300.5 480V527M304.5 480V522M308.5 485V525M312.5 510V554M316.5 502V558M320.5 490V526M324.5 512V554M328.5 533V589M332.5 527V585M336.5 472V546M340.5 493V553M344.5 507V562M348.5 527V635M352.5 591V632M356.5 570V609M360.5 552V601M364.5 548V581M368.5 575V594M372.5 581V606M376.5 579V595M380.5 579V604M384.5 591V639M388.5 623V657M392.5 617V650M396.5 604V630M400.5 602V615M404.5 581V611M408.5 579V598M412.5 550V587M416.5 557V595M420.5 580V596M424.5 569V595M428.5 569V592M432.5 573V587M436.5 571V589M440.5 569V581M444.5 569V586M448.5 574V587M452.5 580V591M456.5 574V592M460.5 570V584M464.5 569V585M468.5 582V591M472.5 540V588M476.5 539V563M480.5 536V561M484.5 550V676M488.5 595V640M492.5 588V624M496.5 596V625M500.5 598V621M504.5 617V664M508.5 624V656M512.5 608V643M516.5 616V645M520.5 642V698M524.5 667V681M528.5 663V695M532.5 652V684M536.5 652V669M540.5 634V662M544.5 641V660M548.5 650V674M552.5 662V674M556.5 660V694M560.5 622V693M564.5 631V651M568.5 634V665M572.5 623V670M576.5 622V670M580.5 622V650M584.5 632V678M588.5 666V743M592.5 695V753M596.5 698V734M600.5 676V710M604.5 633V703M608.5 648V691M612.5 651V708M616.5 677V721M620.5 681V729M624.5 707V744M628.5 679V726M632.5 691V732M636.5 679V724M640.5 680V703M644.5 680V738M648.5 735V776M652.5 755V789M656.5 745V770M660.5 744V770M664.5 703V762M668.5 711V740M672.5 729V766M676.5 719V750M680.5 738V779M684.5 707V764M688.5 681V720M692.5 693V762M696.5 749V809M700.5 766V810M704.5 754V814M708.5 756V801M712.5 702V773M716.5 656V709M720.5 641V674M724.5 632V678M728.5 591V645M732.5 560V634M736.5 540V609M740.5 537V589M744.5 513V565M748.5 512V553M752.5 515V573M756.5 552V573M760.5 540V570M764.5 552V589M768.5 583V617M772.5 559V617M776.5 490V619M780.5 501V547M784.5 527V587M788.5 555V592M792.5 565V585M796.5 559V585M800.5 557V570M804.5 566V579M808.5 556V579M812.5 559V582M816.5 555V570M820.5 564V579M824.5 566V584M828.5 566V583M832.5 579V603M836.5 573V624M840.5 554V588M844.5 564V589M848.5 561V584M852.5 574V589M856.5 564V588M860.5 560V575M864.5 561V584M868.5 533V576M872.5 535V552M876.5 498V545M880.5 485V513M884.5 486V516M888.5 485V518M892.5 509V539M896.5 479V539M900.5 435V507M904.5 420V451M908.5 433V463M912.5 443V472M916.5 438V468M920.5 440V460M924.5 425V453M928.5 424V435M932.5 428V449M936.5 427V460M940.5 429V452M944.5 445V458M948.5 443V458M952.5 447V468M956.5 439V469M960.5 439V462M964.5 416V458M968.5 391V452M972.5 369V429M976.5 383V431M980.5 347V430M984.5 326V388M988.5 328V365M992.5 255V358M996.5 254V321M1000.5 301V338M1004.5 292V324M1008.5 296V346M1012.5 311V351M1016.5 308V347M1020.5 310V331M1024.5 296V326M1028.5 267V315M1032.5 245V304M1036.5 279V312M1040.5 284V327M1044.5 273V325M1048.5 260V289M1052.5 278V315M1056.5 305V338M1060.5 320V344M1064.5 282V337M1068.5 284V327M1072.5 286V323M1076.5 309V350M1080.5 317V350M1084.5 332V373M1088.5 343V398M1092.5 321V351M1096.5 254V339M1100.5 248V290M1104.5 187V277M1108.5 139V202M1112.5 135V179M1116.5 146V181M1120.5 152V196M1124.5 168V206M1128.5 170V198M1132.5 169V238M1136.5 193V213M1140.5 204V228M1144.5 206V230M1148.5 157V213M1152.5 185V212M1156.5 187V217M1160.5 187V222M1164.5 202V213M1168.5 177V205M1172.5 177V194M1176.5 172V193M1180.5 170V191M1184.5 168V206M1188.5 180V204M1192.5 180V205M1196.5 190V211M1200.5 190V200M1204.5 193V211M1208.5 181V214M1212.5 177V203M1216.5 188V205M1220.5 179V205M1224.5 181V206M1228.5 182V205M1232.5 199V214M1236.5 184V209M1240.5 187V208M1244.5 192V201M1248.5 195V240M1252.5 217V233M1256.5 217V251M1260.5 233V259M1264.5 241V261M1268.5 247V265M1272.5 240V263M1276.5 247V264M1280.5 222V280M1284.5 250V278M1288.5 252V273M1292.5 265V286M1296.5 276V301M1300.5 268V294M1304.5 278V297M1308.5 246V283M1312.5 250V265M1316.5 256V271M1320.5 260V274M1324.5 257V308M1328.5 290V314M1332.5 282V303M1336.5 280V314M1340.5 296V313M1344.5 284V314M1348.5 278V292M1352.5 258V287M1356.5 280V321M1360.5 293V320M1364.5 302V344M1368.5 320V356M1372.5 341V375M1376.5 344V376M1380.5 316V356M1384.5 339V378M1388.5 327V356M1392.5 327V360M1396.5 319V345M1400.5 320V342M1404.5 333V363M1408.5 351V379M1412.5 358V388M1416.5 344V406M1420.5 384V423M1424.5 388V423M1428.5 386V424M1432.5 358V415M1436.5 338V398M1440.5 310V411M1444.5 327V415M1448.5 256V389M1452.5 337V399M1456.5 217V425M1460.5 276V452M1464.5 395V502M1468.5 401V488M1472.5 390V457M1476.5 305V411M1480.5 289V347M1484.5 247V319M1488.5 286V371M1492.5 293V344M1496.5 311V364M1500.5 313V350M1504.5 325V399M1508.5 337V433M1512.5 330V391M1516.5 332V370M1520.5 319V341M1524.5 305V328M1528.5 297V337M1532.5 314V337" stroke="#00ff00" stroke-width="1" fill="none"/><path d="M192 546h2v27h-2zM195 536h3v22h-3zM199 525h3v14h-3zM203 514h3v13h-3zM207 514h3v29h-3zM211 541h3v37h-3zM215 575h3v8h-3zM219 542h3v41h-3zM223 542h3v21h-3zM227 562h3v1h-3zM231 556h3v7h-3zM235 557h3v22h-3zM239 579h3v58h-3zM243 636h3v2h-3zM247 638h3v15h-3zM251 630h3v22h-3zM255 625h3v7h-3zM259 607h3v19h-3zM263 608h3v5h-3zM267 570h3v46h-3zM271 557h3v15h-3zM275 557h3v32h-3zM279 588h3v21h-3zM283 602h3v6h-3zM287 602h3v6h-3zM291 563h3v44h-3zM295 508h3v55h-3zM299 486h3v23h-3zM303 486h3v31h-3zM307 512h3v6h-3zM311 512h3v39h-3zM315 511h3v40h-3zM319 511h3v10h-3zM323 520h3v12h-3zM327 534h3v34h-3zM331 543h3v25h-3zM335 501h3v43h-3zM339 501h3v32h-3zM343 532h3v28h-3zM347 557h3v66h-3zM351 602h3v21h-3zM355 578h3v25h-3zM359 568h3v11h-3zM363 568h3v8h-3zM367 576h3v17h-3zM371 590h3v4h-3zM375 581h3v13h-3zM379 580h3v20h-3zM383 599h3v39h-3zM387 636h3v13h-3zM391 623h3v26h-3zM395 609h3v14h-3zM399 609h3v4h-3zM403 588h3v22h-3zM407 585h3v4h-3zM411 557h3v29h-3zM415 557h3v26h-3zM419 581h3v14h-3zM423 569h3v25h-3zM427 569h3v16h-3zM431 580h3v6h-3zM435 578h3v3h-3zM439 577h3v3h-3zM443 577h3v3h-3zM447 578h3v6h-3zM451 583h3v5h-3zM455 581h3v7h-3zM459 578h3v4h-3zM463 578h3v6h-3zM467 584h3v4h-3zM471 541h3v47h-3zM475 541h3v20h-3zM479 553h3v8h-3zM483 556h3v72h-3zM487 622h3v8h-3zM491 602h3v21h-3zM495 602h3v2h-3zM499 603h3v16h-3zM503 617h3v33h-3zM507 630h3v20h-3zM511 617h3v14h-3zM515 618h3v26h-3zM519 643h3v25h-3zM523 667h3v6h-3zM527 672h3v2h-3zM531 653h3v18h-3zM535 653h3v9h-3zM539 643h3v19h-3zM543 643h3v16h-3zM547 657h3v16h-3zM551 663h3v8h-3zM555 661h3v24h-3zM559 632h3v53h-3zM563 633h3v10h-3zM567 642h3v20h-3zM571 632h3v30h-3zM575 633h3v5h-3zM579 633h3v5h-3zM583 632h3v38h-3zM587 671h3v70h-3zM591 715h3v26h-3zM595 699h3v17h-3zM599 695h3v6h-3zM603 651h3v45h-3zM607 651h3v18h-3zM611 669h3v32h-3zM615 700h3v16h-3zM619 708h3v9h-3zM623 708h3v2h-3zM627 708h3v11h-3zM631 710h3v9h-3zM635 699h3v11h-3zM639 688h3v12h-3zM643 688h3v49h-3zM647 738h3v37h-3zM651 756h3v18h-3zM655 756h3v11h-3zM659 760h3v7h-3zM663 729h3v32h-3zM667 729h3v8h-3zM671 736h3v10h-3zM675 738h3v7h-3zM679 738h3v20h-3zM683 711h3v47h-3zM687 711h3v4h-3zM691 715h3v35h-3zM695 749h3v28h-3zM699 776h3v18h-3zM703 757h3v37h-3zM707 757h3v14h-3zM711 713h3v58h-3zM715 663h3v43h-3zM719 664h3v3h-3zM723 634h3v33h-3zM727 631h3v3h-3zM731 603h3v29h-3zM735 568h3v36h-3zM739 546h3v23h-3zM743 546h3v5h-3zM747 523h3v28h-3zM751 523h3v43h-3zM755 561h3v5h-3zM759 555h3v9h-3zM763 556h3v31h-3zM767 586h3v30h-3zM771 565h3v51h-3zM775 510h3v56h-3zM779 510h3v19h-3zM783 529h3v49h-3zM787 566h3v11h-3zM791 568h3v9h-3zM795 563h3v14h-3zM799 565h3v4h-3zM803 567h3v12h-3zM807 576h3v3h-3zM811 565h3v12h-3zM815 565h3v3h-3zM819 567h3v5h-3zM823 571h3v5h-3zM827 571h3v10h-3zM831 582h3v6h-3zM835 582h3v7h-3zM839 566h3v13h-3zM843 567h3v15h-3zM847 580h3v2h-3zM851 580h3v5h-3zM855 567h3v20h-3zM859 561h3v7h-3zM863 562h3v13h-3zM867 538h3v37h-3zM871 538h3v4h-3zM875 502h3v42h-3zM879 500h3v3h-3zM883 488h3v13h-3zM887 488h3v26h-3zM891 512h3v15h-3zM895 492h3v35h-3zM899 442h3v51h-3zM903 433h3v13h-3zM907 433h3v11h-3zM911 444h3v23h-3zM915 447h3v20h-3zM919 445h3v3h-3zM923 428h3v18h-3zM927 428h3v4h-3zM931 431h3v17h-3zM935 431h3v17h-3zM939 431h3v17h-3zM943 447h3v10h-3zM947 454h3v3h-3zM951 454h3v9h-3zM955 452h3v11h-3zM959 452h3v5h-3zM963 419h3v36h-3zM967 405h3v16h-3zM971 405h3v3h-3zM975 407h3v15h-3zM979 358h3v64h-3zM983 329h3v31h-3zM987 329h3v8h-3zM991 269h3v68h-3zM995 270h3v35h-3zM999 306h3v7h-3zM1003 312h3v7h-3zM1007 318h3v14h-3zM1011 331h3v15h-3zM1015 318h3v29h-3zM1019 318h3v7h-3zM1023 308h3v16h-3zM1027 291h3v19h-3zM1031 292h3v9h-3zM1035 287h3v14h-3zM1039 287h3v31h-3zM1043 281h3v37h-3zM1047 279h3v6h-3zM1051 279h3v28h-3zM1055 306h3v31h-3zM1059 327h3v9h-3zM1063 314h3v14h-3zM1067 312h3v3h-3zM1071 311h3v8h-3zM1075 318h3v29h-3zM1079 332h3v15h-3zM1083 333h3v14h-3zM1087 345h3v4h-3zM1091 323h3v25h-3zM1095 274h3v50h-3zM1099 266h3v9h-3zM1103 188h3v79h-3zM1107 144h3v45h-3zM1111 144h3v27h-3zM1115 165h3v6h-3zM1119 167h3v25h-3zM1123 190h3v3h-3zM1127 170h3v22h-3zM1131 170h3v41h-3zM1135 209h3v3h-3zM1139 210h3v15h-3zM1143 212h3v14h-3zM1147 187h3v26h-3zM1151 187h3v18h-3zM1155 188h3v17h-3zM1159 188h3v17h-3zM1163 203h3v3h-3zM1167 180h3v25h-3zM1171 181h3v5h-3zM1175 185h3v3h-3zM1179 172h3v15h-3zM1183 172h3v32h-3zM1187 198h3v6h-3zM1191 198h3v3h-3zM1195 195h3v6h-3zM1199 195h3v3h-3zM1203 196h3v2h-3zM1207 188h3v9h-3zM1211 188h3v9h-3zM1215 189h3v10h-3zM1219 189h3v10h-3zM1223 182h3v19h-3zM1227 182h3v20h-3zM1231 200h3v8h-3zM1235 188h3v20h-3zM1239 189h3v9h-3zM1243 196h3v4h-3zM1247 196h3v29h-3zM1251 221h3v5h-3zM1255 219h3v21h-3zM1259 238h3v14h-3zM1263 250h3v10h-3zM1267 249h3v10h-3zM1271 250h3v5h-3zM1275 254h3v2h-3zM1279 254h3v23h-3zM1283 252h3v25h-3zM1287 252h3v19h-3zM1291 269h3v17h-3zM1295 278h3v6h-3zM1299 278h3v14h-3zM1303 280h3v13h-3zM1307 255h3v27h-3zM1311 257h3v4h-3zM1315 259h3v11h-3zM1319 262h3v8h-3zM1323 263h3v33h-3zM1327 293h3v3h-3zM1331 288h3v7h-3zM1335 288h3v17h-3zM1339 305h3v3h-3zM1343 286h3v22h-3zM1347 279h3v8h-3zM1351 278h3v3h-3zM1355 281h3v32h-3zM1359 312h3v7h-3zM1363 317h3v5h-3zM1367 320h3v35h-3zM1371 349h3v6h-3zM1375 346h3v4h-3zM1379 345h3v6h-3zM1383 346h3v6h-3zM1387 346h3v10h-3zM1391 328h3v28h-3zM1395 320h3v9h-3zM1399 321h3v20h-3zM1403 340h3v14h-3zM1407 353h3v15h-3zM1411 367h3v8h-3zM1415 374h3v20h-3zM1419 388h3v7h-3zM1423 389h3v19h-3zM1427 406h3v2h-3zM1431 396h3v13h-3zM1435 347h3v50h-3zM1439 346h3v34h-3zM1443 376h3v5h-3zM1447 363h3v14h-3zM1451 349h3v15h-3zM1455 300h3v47h-3zM1459 300h3v115h-3zM1463 414h3v23h-3zM1467 430h3v7h-3zM1471 407h3v24h-3zM1475 307h3v102h-3zM1479 291h3v18h-3zM1483 287h3v5h-3zM1487 287h3v34h-3zM1491 319h3v23h-3zM1495 335h3v8h-3zM1499 325h3v11h-3zM1503 325h3v48h-3zM1507 352h3v22h-3zM1511 352h3v18h-3zM1515 337h3v33h-3zM1519 320h3v19h-3zM1523 306h3v16h-3zM1527 306h3v18h-3zM1531 315h3v10h-3z" fill="#00ff00"/><path d="M192 547h1v25h-1zM196 537h1v20h-1zM200 526h1v12h-1zM204 515h1v11h-1zM220 543h1v39h-1zM232 557h1v5h-1zM252 631h1v20h-1zM256 626h1v5h-1zM260 608h1v17h-1zM268 571h1v44h-1zM272 558h1v13h-1zM284 603h1v4h-1zM292 564h1v42h-1zM296 509h1v53h-1zM300 487h1v21h-1zM308 513h1v4h-1zM316 512h1v38h-1zM332 544h1v23h-1zM336 502h1v41h-1zM352 603h1v19h-1zM356 579h1v23h-1zM360 569h1v9h-1zM376 582h1v11h-1zM392 624h1v24h-1zM396 610h1v12h-1zM400 610h1v2h-1zM404 589h1v20h-1zM408 586h1v2h-1zM412 558h1v27h-1zM424 570h1v23h-1zM432 581h1v4h-1zM436 579h1v1h-1zM456 582h1v5h-1zM460 579h1v2h-1zM472 542h1v45h-1zM480 554h1v6h-1zM488 623h1v6h-1zM492 603h1v19h-1zM508 631h1v18h-1zM512 618h1v12h-1zM532 654h1v16h-1zM540 644h1v17h-1zM552 664h1v6h-1zM560 633h1v51h-1zM572 633h1v28h-1zM580 634h1v3h-1zM592 716h1v24h-1zM596 700h1v15h-1zM600 696h1v4h-1zM604 652h1v43h-1zM620 709h1v7h-1zM632 711h1v7h-1zM636 700h1v9h-1zM640 689h1v10h-1zM652 757h1v16h-1zM660 761h1v5h-1zM664 730h1v30h-1zM676 739h1v5h-1zM684 712h1v45h-1zM704 758h1v35h-1zM712 714h1v56h-1zM716 664h1v41h-1zM724 635h1v31h-1zM728 632h1v1h-1zM732 604h1v27h-1zM736 569h1v34h-1zM740 547h1v21h-1zM748 524h1v26h-1zM756 562h1v3h-1zM760 556h1v7h-1zM772 566h1v49h-1zM776 511h1v54h-1zM788 567h1v9h-1zM796 564h1v12h-1zM808 577h1v1h-1zM812 566h1v10h-1zM824 572h1v3h-1zM836 583h1v5h-1zM840 567h1v11h-1zM856 568h1v18h-1zM860 562h1v5h-1zM868 539h1v35h-1zM876 503h1v40h-1zM880 501h1v1h-1zM884 489h1v11h-1zM896 493h1v33h-1zM900 443h1v49h-1zM904 434h1v11h-1zM916 448h1v18h-1zM920 446h1v1h-1zM924 429h1v16h-1zM936 432h1v15h-1zM948 455h1v1h-1zM956 453h1v9h-1zM964 420h1v34h-1zM968 406h1v14h-1zM980 359h1v62h-1zM984 330h1v29h-1zM992 270h1v66h-1zM1016 319h1v27h-1zM1024 309h1v14h-1zM1028 292h1v17h-1zM1036 288h1v12h-1zM1044 282h1v35h-1zM1048 280h1v4h-1zM1060 328h1v7h-1zM1064 315h1v12h-1zM1068 313h1v1h-1zM1080 333h1v13h-1zM1092 324h1v23h-1zM1096 275h1v48h-1zM1100 267h1v7h-1zM1104 189h1v77h-1zM1108 145h1v43h-1zM1116 166h1v4h-1zM1128 171h1v20h-1zM1144 213h1v12h-1zM1148 188h1v24h-1zM1156 189h1v15h-1zM1168 181h1v23h-1zM1180 173h1v13h-1zM1188 199h1v4h-1zM1196 196h1v4h-1zM1208 189h1v7h-1zM1216 190h1v8h-1zM1224 183h1v17h-1zM1236 189h1v18h-1zM1252 222h1v3h-1zM1268 250h1v8h-1zM1284 253h1v23h-1zM1296 279h1v4h-1zM1304 281h1v11h-1zM1308 256h1v25h-1zM1320 263h1v6h-1zM1332 289h1v5h-1zM1344 287h1v20h-1zM1348 280h1v6h-1zM1372 350h1v4h-1zM1376 347h1v2h-1zM1384 347h1v4h-1zM1392 329h1v26h-1zM1396 321h1v7h-1zM1420 389h1v5h-1zM1432 397h1v11h-1zM1436 348h1v48h-1zM1448 364h1v12h-1zM1452 350h1v13h-1zM1456 301h1v45h-1zM1468 431h1v5h-1zM1472 408h1v22h-1zM1476 308h1v100h-1zM1480 292h1v16h-1zM1484 288h1v3h-1zM1496 336h1v6h-1zM1500 326h1v9h-1zM1508 353h1v20h-1zM1516 338h1v31h-1zM1520 321h1v17h-1zM1524 307h1v14h-1zM1532 316h1v8h-1z" fill="#000"/><path d="M208 515h1v27h-1zM212 542h1v35h-1zM216 576h1v6h-1zM224 543h1v19h-1zM236 558h1v20h-1zM240 580h1v56h-1zM248 639h1v13h-1zM264 609h1v3h-1zM276 558h1v30h-1zM280 589h1v19h-1zM288 603h1v4h-1zM304 487h1v29h-1zM312 513h1v37h-1zM320 512h1v8h-1zM324 521h1v10h-1zM328 535h1v32h-1zM340 502h1v30h-1zM344 533h1v26h-1zM348 558h1v64h-1zM364 569h1v6h-1zM368 577h1v15h-1zM372 591h1v2h-1zM380 581h1v18h-1zM384 600h1v37h-1zM388 637h1v11h-1zM416 558h1v24h-1zM420 582h1v12h-1zM428 570h1v14h-1zM440 578h1v1h-1zM444 578h1v1h-1zM448 579h1v4h-1zM452 584h1v3h-1zM464 579h1v4h-1zM468 585h1v2h-1zM476 542h1v18h-1zM484 557h1v70h-1zM500 604h1v14h-1zM504 618h1v31h-1zM516 619h1v24h-1zM520 644h1v23h-1zM524 668h1v4h-1zM536 654h1v7h-1zM544 644h1v14h-1zM548 658h1v14h-1zM556 662h1v22h-1zM564 634h1v8h-1zM568 643h1v18h-1zM576 634h1v3h-1zM584 633h1v36h-1zM588 672h1v68h-1zM608 652h1v16h-1zM612 670h1v30h-1zM616 701h1v14h-1zM628 709h1v9h-1zM644 689h1v47h-1zM648 739h1v35h-1zM656 757h1v9h-1zM668 730h1v6h-1zM672 737h1v8h-1zM680 739h1v18h-1zM688 712h1v2h-1zM692 716h1v33h-1zM696 750h1v26h-1zM700 777h1v16h-1zM708 758h1v12h-1zM720 665h1v1h-1zM744 547h1v3h-1zM752 524h1v41h-1zM764 557h1v29h-1zM768 587h1v28h-1zM780 511h1v17h-1zM784 530h1v47h-1zM792 569h1v7h-1zM800 566h1v2h-1zM804 568h1v10h-1zM816 566h1v1h-1zM820 568h1v3h-1zM828 572h1v8h-1zM832 583h1v4h-1zM844 568h1v13h-1zM852 581h1v3h-1zM864 563h1v11h-1zM872 539h1v2h-1zM888 489h1v24h-1zM892 513h1v13h-1zM908 434h1v9h-1zM912 445h1v21h-1zM928 429h1v2h-1zM932 432h1v15h-1zM940 432h1v15h-1zM944 448h1v8h-1zM952 455h1v7h-1zM960 453h1v3h-1zM972 406h1v1h-1zM976 408h1v13h-1zM988 330h1v6h-1zM996 271h1v33h-1zM1000 307h1v5h-1zM1004 313h1v5h-1zM1008 319h1v12h-1zM1012 332h1v13h-1zM1020 319h1v5h-1zM1032 293h1v7h-1zM1040 288h1v29h-1zM1052 280h1v26h-1zM1056 307h1v29h-1zM1072 312h1v6h-1zM1076 319h1v27h-1zM1084 334h1v12h-1zM1088 346h1v2h-1zM1112 145h1v25h-1zM1120 168h1v23h-1zM1124 191h1v1h-1zM1132 171h1v39h-1zM1136 210h1v1h-1zM1140 211h1v13h-1zM1152 188h1v16h-1zM1160 189h1v15h-1zM1164 204h1v1h-1zM1172 182h1v3h-1zM1176 186h1v1h-1zM1184 173h1v30h-1zM1192 199h1v1h-1zM1200 196h1v1h-1zM1212 189h1v7h-1zM1220 190h1v8h-1zM1228 183h1v18h-1zM1232 201h1v6h-1zM1240 190h1v7h-1zM1244 197h1v2h-1zM1248 197h1v27h-1zM1256 220h1v19h-1zM1260 239h1v12h-1zM1264 251h1v8h-1zM1272 251h1v3h-1zM1280 255h1v21h-1zM1288 253h1v17h-1zM1292 270h1v15h-1zM1300 279h1v12h-1zM1312 258h1v2h-1zM1316 260h1v9h-1zM1324 264h1v31h-1zM1328 294h1v1h-1zM1336 289h1v15h-1zM1340 306h1v1h-1zM1352 279h1v1h-1zM1356 282h1v30h-1zM1360 313h1v5h-1zM1364 318h1v3h-1zM1368 321h1v33h-1zM1380 346h1v4h-1zM1388 347h1v8h-1zM1400 322h1v18h-1zM1404 341h1v12h-1zM1408 354h1v13h-1zM1412 368h1v6h-1zM1416 375h1v18h-1zM1424 390h1v17h-1zM1440 347h1v32h-1zM1444 377h1v3h-1zM1460 301h1v113h-1zM1464 415h1v21h-1zM1488 288h1v32h-1zM1492 320h1v21h-1zM1504 326h1v46h-1zM1512 353h1v16h-1zM1528 307h1v16h-1z" fill="#fff"/></svg>
<span class="t" style="top:102.1px;line-height:13px;font-size:9.7px;color:#fff;letter-spacing:-0.215px;left:196.0px;">EURUSD,M15  1.42934 1.42960 1.42900 1.42960</span>
<span class="t" style="top:106.2px;line-height:13px;font-size:9.7px;color:#fff;letter-spacing:-0.395px;left:1884.5px;">1.43545</span>
<span class="t" style="top:138.2px;line-height:13px;font-size:9.7px;color:#fff;letter-spacing:-0.395px;left:1884.5px;">1.43450</span>
<span class="t" style="top:171.2px;line-height:13px;font-size:9.7px;color:#fff;letter-spacing:-0.395px;left:1884.5px;">1.43355</span>
<span class="t" style="top:204.2px;line-height:13px;font-size:9.7px;color:#fff;letter-spacing:-0.395px;left:1884.5px;">1.43260</span>
<span class="t" style="top:236.2px;line-height:13px;font-size:9.7px;color:#fff;letter-spacing:-0.395px;left:1884.5px;">1.43165</span>
<span class="t" style="top:269.2px;line-height:13px;font-size:9.7px;color:#fff;letter-spacing:-0.395px;left:1884.5px;">1.43070</span>
<span class="t" style="top:334.2px;line-height:13px;font-size:9.7px;color:#fff;letter-spacing:-0.395px;left:1884.5px;">1.42880</span>
<span class="t" style="top:366.2px;line-height:13px;font-size:9.7px;color:#fff;letter-spacing:-0.395px;left:1884.5px;">1.42785</span>
<span class="t" style="top:399.2px;line-height:13px;font-size:9.7px;color:#fff;letter-spacing:-0.395px;left:1884.5px;">1.42690</span>
<span class="t" style="top:432.2px;line-height:13px;font-size:9.7px;color:#fff;letter-spacing:-0.395px;left:1884.5px;">1.42595</span>
<span class="t" style="top:464.2px;line-height:13px;font-size:9.7px;color:#fff;letter-spacing:-0.395px;left:1884.5px;">1.42500</span>
<span class="t" style="top:497.2px;line-height:13px;font-size:9.7px;color:#fff;letter-spacing:-0.395px;left:1884.5px;">1.42405</span>
<span class="t" style="top:529.2px;line-height:13px;font-size:9.7px;color:#fff;letter-spacing:-0.395px;left:1884.5px;">1.42310</span>
<span class="t" style="top:562.2px;line-height:13px;font-size:9.7px;color:#fff;letter-spacing:-0.395px;left:1884.5px;">1.42215</span>
<span class="t" style="top:595.2px;line-height:13px;font-size:9.7px;color:#fff;letter-spacing:-0.395px;left:1884.5px;">1.42120</span>
<span class="t" style="top:627.2px;line-height:13px;font-size:9.7px;color:#fff;letter-spacing:-0.395px;left:1884.5px;">1.42025</span>
<span class="t" style="top:660.2px;line-height:13px;font-size:9.7px;color:#fff;letter-spacing:-0.395px;left:1884.5px;">1.41930</span>
<span class="t" style="top:692.2px;line-height:13px;font-size:9.7px;color:#fff;letter-spacing:-0.395px;left:1884.5px;">1.41835</span>
<span class="t" style="top:725.2px;line-height:13px;font-size:9.7px;color:#fff;letter-spacing:-0.395px;left:1884.5px;">1.41740</span>
<span class="t" style="top:758.2px;line-height:13px;font-size:9.7px;color:#fff;letter-spacing:-0.395px;left:1884.5px;">1.41645</span>
<span class="t" style="top:790.2px;line-height:13px;font-size:9.7px;color:#fff;letter-spacing:-0.395px;left:1884.5px;">1.41550</span>
<span class="t" style="top:823.2px;line-height:13px;font-size:9.7px;color:#fff;letter-spacing:-0.395px;left:1884.5px;">1.41455</span>
<span class="t" style="top:301.2px;line-height:13px;font-size:9.7px;color:#fff;letter-spacing:-0.395px;left:1884.5px;">1.42975</span>
<div class="r" style="left:1880px;top:308px;width:38px;height:11px;background:#fff;"></div>
<span class="t" style="top:307.3px;line-height:13px;font-size:9.7px;color:#000;letter-spacing:-0.395px;left:1884.5px;">1.42960</span>
<span class="t" style="top:834.5px;line-height:13px;font-size:9.7px;color:#fff;letter-spacing:-0.050px;left:191.0px;">4 Apr 2011</span>
<span class="t" style="top:834.5px;line-height:13px;font-size:9.7px;color:#fff;letter-spacing:-0.038px;left:255.0px;">4 Apr 12:30</span>
<span class="t" style="top:834.5px;line-height:13px;font-size:9.7px;color:#fff;letter-spacing:-0.038px;left:319.0px;">4 Apr 16:30</span>
<span class="t" style="top:834.5px;line-height:13px;font-size:9.7px;color:#fff;letter-spacing:-0.038px;left:383.0px;">4 Apr 20:30</span>
<span class="t" style="top:834.5px;line-height:13px;font-size:9.7px;color:#fff;letter-spacing:-0.038px;left:447.0px;">5 Apr 00:30</span>
<span class="t" style="top:834.5px;line-height:13px;font-size:9.7px;color:#fff;letter-spacing:-0.038px;left:511.0px;">5 Apr 04:30</span>
<span class="t" style="top:834.5px;line-height:13px;font-size:9.7px;color:#fff;letter-spacing:-0.038px;left:575.0px;">5 Apr 08:30</span>
<span class="t" style="top:834.5px;line-height:13px;font-size:9.7px;color:#fff;letter-spacing:-0.038px;left:639.0px;">5 Apr 12:30</span>
<span class="t" style="top:834.5px;line-height:13px;font-size:9.7px;color:#fff;letter-spacing:-0.038px;left:703.0px;">5 Apr 16:30</span>
<span class="t" style="top:834.5px;line-height:13px;font-size:9.7px;color:#fff;letter-spacing:-0.038px;left:767.0px;">5 Apr 20:30</span>
<span class="t" style="top:834.5px;line-height:13px;font-size:9.7px;color:#fff;letter-spacing:-0.038px;left:831.0px;">6 Apr 00:30</span>
<span class="t" style="top:834.5px;line-height:13px;font-size:9.7px;color:#fff;letter-spacing:-0.038px;left:895.0px;">6 Apr 04:30</span>
<span class="t" style="top:834.5px;line-height:13px;font-size:9.7px;color:#fff;letter-spacing:-0.038px;left:959.0px;">6 Apr 08:30</span>
<span class="t" style="top:834.5px;line-height:13px;font-size:9.7px;color:#fff;letter-spacing:-0.038px;left:1023.0px;">6 Apr 12:30</span>
<span class="t" style="top:834.5px;line-height:13px;font-size:9.7px;color:#fff;letter-spacing:-0.038px;left:1087.0px;">6 Apr 16:30</span>
<span class="t" style="top:834.5px;line-height:13px;font-size:9.7px;color:#fff;letter-spacing:-0.038px;left:1151.0px;">6 Apr 20:30</span>
<span class="t" style="top:834.5px;line-height:13px;font-size:9.7px;color:#fff;letter-spacing:-0.038px;left:1215.0px;">7 Apr 00:30</span>
<span class="t" style="top:834.5px;line-height:13px;font-size:9.7px;color:#fff;letter-spacing:-0.038px;left:1279.0px;">7 Apr 04:30</span>
<span class="t" style="top:834.5px;line-height:13px;font-size:9.7px;color:#fff;letter-spacing:-0.038px;left:1343.0px;">7 Apr 08:30</span>
<span class="t" style="top:834.5px;line-height:13px;font-size:9.7px;color:#fff;letter-spacing:-0.038px;left:1407.0px;">7 Apr 12:30</span>
<span class="t" style="top:834.5px;line-height:13px;font-size:9.7px;color:#fff;letter-spacing:-0.038px;left:1471.0px;">7 Apr 16:30</span>
<div class="r" style="left:189px;top:855px;width:1729px;height:18px;background:#f0f0f0;"></div>
<div class="r" style="left:191px;top:853px;width:88px;height:19px;box-sizing:border-box;background:#fff;border:1px solid #000;border-top:none;border-right-width:2px;border-bottom-width:2px;"></div>
<span class="t" style="top:854.5px;line-height:15px;font-size:11px;color:#000;letter-spacing:-0.691px;left:202.5px;">EURUSD,M15</span>
<span class="t" style="top:854.5px;line-height:15px;font-size:11px;color:#6d6d6d;letter-spacing:-0.407px;left:290.0px;">USDCHF,M15</span>
<span class="t" style="top:854.5px;line-height:15px;font-size:11px;color:#6d6d6d;letter-spacing:-0.731px;left:378.0px;">GBPUSD,H4</span>
<span class="t" style="top:854.5px;line-height:15px;font-size:11px;color:#6d6d6d;letter-spacing:-0.456px;left:457.0px;">USDJPY,H4</span>
<span class="t" style="top:854.5px;line-height:15px;font-size:11px;color:#6d6d6d;letter-spacing:-0.619px;left:534.0px;">AUDUSD,H1</span>
<span class="t" style="top:854.5px;line-height:15px;font-size:11px;color:#6d6d6d;letter-spacing:-0.345px;left:612.0px;">CADJPY,H1</span>
<div class="r" style="left:366px;top:857px;width:1px;height:12px;background:#6d6d6d;"></div>
<div class="r" style="left:446px;top:857px;width:1px;height:12px;background:#6d6d6d;"></div>
<div class="r" style="left:523px;top:857px;width:1px;height:12px;background:#6d6d6d;"></div>
<div class="r" style="left:602px;top:857px;width:1px;height:12px;background:#6d6d6d;"></div>
<div class="r" style="left:679px;top:857px;width:1px;height:12px;background:#6d6d6d;"></div>
<svg style="left:1891px;top:859px" width="22" height="8" viewBox="0 0 22 8"><path d="M4 0v8l-4-4z" fill="#8a8a8a"/><path d="M18 0v8l4-4z" fill="#8a8a8a"/></svg>
<div class="r" style="left:0px;top:873px;width:1918px;height:4px;background:#f7f7f7;"></div>
<div class="r" style="left:0px;top:877px;width:1918px;height:252px;background:#f0f0f0;"></div>
<svg style="left:3px;top:880px" width="7" height="6" viewBox="0 0 7 6"><path d="M.8 .5l5.4 5M6.2 .5l-5.4 5" stroke="#000" stroke-width="1.7"/></svg>
<div class="r" style="left:15px;top:877px;width:1884px;height:1px;background:#9a9a9a;"></div>
<div class="r" style="left:15px;top:877px;width:1px;height:238px;background:#9a9a9a;"></div>
<div class="r" style="left:16px;top:878px;width:1883px;height:237px;background:#fff;"></div>
<div class="r" style="left:16px;top:878px;width:1883px;height:22px;background:linear-gradient(180deg,#fff 0,#fff 42%,#f5f6f9 46%,#f2f3f6 100%);"></div>
<div class="r" style="left:16px;top:900px;width:1883px;height:1px;background:#d9d9d9;"></div>
<div class="r" style="left:153px;top:879px;width:1px;height:20px;background:#e3e4e6;"></div>
<div class="r" style="left:388px;top:879px;width:1px;height:20px;background:#e3e4e6;"></div>
<div class="r" style="left:494px;top:879px;width:1px;height:20px;background:#e3e4e6;"></div>
<div class="r" style="left:579px;top:879px;width:1px;height:20px;background:#e3e4e6;"></div>
<div class="r" style="left:685px;top:879px;width:1px;height:20px;background:#e3e4e6;"></div>
<div class="r" style="left:791px;top:879px;width:1px;height:20px;background:#e3e4e6;"></div>
<div class="r" style="left:897px;top:879px;width:1px;height:20px;background:#e3e4e6;"></div>
<div class="r" style="left:1003px;top:879px;width:1px;height:20px;background:#e3e4e6;"></div>
<div class="r" style="left:1238px;top:879px;width:1px;height:20px;background:#e3e4e6;"></div>
<div class="r" style="left:1344px;top:879px;width:1px;height:20px;background:#e3e4e6;"></div>
<div class="r" style="left:1450px;top:879px;width:1px;height:20px;background:#e3e4e6;"></div>
<div class="r" style="left:1567px;top:879px;width:1px;height:20px;background:#e3e4e6;"></div>
<span class="t" style="top:882.8px;line-height:15px;font-size:11px;color:#000;letter-spacing:0.276px;left:22.5px;">Ordre</span>
<span class="t" style="top:882.8px;line-height:15px;font-size:11px;color:#000;letter-spacing:0.236px;right:1534.1px;">Date exécution</span>
<span class="t" style="top:882.8px;line-height:15px;font-size:11px;color:#000;letter-spacing:0.233px;right:1428.1px;">Transaction</span>
<span class="t" style="top:882.8px;line-height:15px;font-size:11px;color:#000;letter-spacing:0.275px;right:1343.0px;">Volume</span>
<span class="t" style="top:882.8px;line-height:15px;font-size:11px;color:#000;letter-spacing:0.275px;right:1237.0px;">Symbole</span>
<span class="t" style="top:882.8px;line-height:15px;font-size:11px;color:#000;letter-spacing:0.213px;right:1131.1px;">Prix</span>
<span class="t" style="top:882.8px;line-height:15px;font-size:11px;color:#000;letter-spacing:0.221px;right:1025.1px;">S/L (Stop/Perte)</span>
<span class="t" style="top:882.8px;line-height:15px;font-size:11px;color:#000;letter-spacing:0.215px;right:919.1px;">T/P (Prendre/pro...</span>
<span class="t" style="top:882.8px;line-height:15px;font-size:11px;color:#000;letter-spacing:0.236px;right:703.8px;">Date exécution</span>
<span class="t" style="top:882.8px;line-height:15px;font-size:11px;color:#000;letter-spacing:0.213px;right:578.1px;">Prix</span>
<span class="t" style="top:882.8px;line-height:15px;font-size:11px;color:#000;letter-spacing:0.279px;right:472.0px;">Echange</span>
<span class="t" style="top:882.8px;line-height:15px;font-size:11px;color:#000;letter-spacing:0.193px;right:355.1px;">Profit</span>
<span class="t" style="top:882.8px;line-height:15px;font-size:11px;color:#000;letter-spacing:0.270px;right:24.0px;">Commentaire</span>
<svg style="left:1224px;top:886px" width="7" height="7" viewBox="0 0 7 7"><path d="M1 6.5L5.5 .5" stroke="#9a9a9a" stroke-width="1"/><path d="M5.5 .5L6.5 6.5H1" stroke="#fff" stroke-width="1" fill="none"/></svg>
<div class="r" style="left:16px;top:922px;width:1883px;height:1px;background:#d0d0d0;"></div>
<div class="r" style="left:16px;top:902px;width:1883px;height:1px;background:#d0d0d0;"></div>
<div class="r" style="left:16px;top:922px;width:1883px;height:20px;background:#ebebeb;"></div>
<div class="r" style="left:16px;top:942px;width:1883px;height:1px;background:#d0d0d0;"></div>
<div class="r" style="left:16px;top:962px;width:1883px;height:1px;background:#d0d0d0;"></div>
<div class="r" style="left:16px;top:962px;width:1883px;height:20px;background:#ebebeb;"></div>
<div class="r" style="left:16px;top:982px;width:1883px;height:1px;background:#d0d0d0;"></div>
<div class="r" style="left:16px;top:1002px;width:1883px;height:1px;background:#d0d0d0;"></div>
<div class="r" style="left:16px;top:1002px;width:1883px;height:20px;background:#ebebeb;"></div>
<div class="r" style="left:16px;top:1022px;width:1883px;height:1px;background:#d0d0d0;"></div>
<div class="r" style="left:16px;top:1042px;width:1883px;height:1px;background:#d0d0d0;"></div>
<div class="r" style="left:16px;top:1042px;width:1883px;height:20px;background:#ebebeb;"></div>
<div class="r" style="left:16px;top:1062px;width:1883px;height:1px;background:#d0d0d0;"></div>
<div class="r" style="left:153px;top:902px;width:1px;height:180px;background:#c4c4c4;"></div>
<div class="r" style="left:388px;top:902px;width:1px;height:180px;background:#c4c4c4;"></div>
<div class="r" style="left:494px;top:902px;width:1px;height:180px;background:#c4c4c4;"></div>
<div class="r" style="left:579px;top:902px;width:1px;height:180px;background:#c4c4c4;"></div>
<div class="r" style="left:685px;top:902px;width:1px;height:180px;background:#c4c4c4;"></div>
<div class="r" style="left:791px;top:902px;width:1px;height:180px;background:#c4c4c4;"></div>
<div class="r" style="left:897px;top:902px;width:1px;height:180px;background:#c4c4c4;"></div>
<div class="r" style="left:1003px;top:902px;width:1px;height:180px;background:#c4c4c4;"></div>
<div class="r" style="left:1238px;top:902px;width:1px;height:180px;background:#c4c4c4;"></div>
<div class="r" style="left:1344px;top:902px;width:1px;height:180px;background:#c4c4c4;"></div>
<div class="r" style="left:1450px;top:902px;width:1px;height:180px;background:#c4c4c4;"></div>
<div class="r" style="left:1567px;top:902px;width:1px;height:180px;background:#c4c4c4;"></div>
<div class="r" style="left:899px;top:903px;width:103px;height:18px;background:#5be85b;"></div>
<div class="r" style="left:899px;top:923px;width:103px;height:18px;background:#5be85b;"></div>
<div class="r" style="left:899px;top:1003px;width:103px;height:18px;background:#5be85b;"></div>
<div class="r" style="left:793px;top:983px;width:103px;height:18px;background:#fca0a0;"></div>
<span class="t" style="top:904.5px;line-height:15px;font-size:11px;color:#000;letter-spacing:-0.218px;left:41.3px;">2092832134</span>
<span class="t" style="top:904.5px;line-height:15px;font-size:11px;color:#000;letter-spacing:-0.042px;right:1532.3px;">2011.03.18 03:15</span>
<span class="t" style="top:904.5px;line-height:15px;font-size:11px;color:#000;letter-spacing:0.186px;right:1426.1px;">sell</span>
<span class="t" style="top:904.5px;line-height:15px;font-size:11px;color:#000;letter-spacing:-0.043px;right:1341.3px;">0.04</span>
<span class="t" style="top:904.5px;line-height:15px;font-size:11px;color:#000;letter-spacing:0.243px;right:1235.1px;">usdchf</span>
<span class="t" style="top:904.5px;line-height:15px;font-size:11px;color:#000;letter-spacing:-0.045px;right:1129.3px;">0.90467</span>
<span class="t" style="top:904.5px;line-height:15px;font-size:11px;color:#000;letter-spacing:-0.045px;right:1023.3px;">0.92107</span>
<span class="t" style="top:904.5px;line-height:15px;font-size:11px;color:#000;letter-spacing:-0.045px;right:917.3px;">0.90207</span>
<span class="t" style="top:904.5px;line-height:15px;font-size:11px;color:#000;letter-spacing:-0.042px;right:682.3px;">2011.03.18 11:11</span>
<span class="t" style="top:904.5px;line-height:15px;font-size:11px;color:#000;letter-spacing:-0.045px;right:576.3px;">0.90207</span>
<span class="t" style="top:904.5px;line-height:15px;font-size:11px;color:#000;letter-spacing:-0.043px;right:470.3px;">0.00</span>
<span class="t" style="top:904.5px;line-height:15px;font-size:11px;color:#000;letter-spacing:-0.043px;right:353.3px;">11.53</span>
<span class="t" style="top:904.5px;line-height:15px;font-size:11px;color:#000;letter-spacing:0.251px;right:22.0px;">complete</span>
<span class="t" style="top:924.5px;line-height:15px;font-size:11px;color:#000;letter-spacing:-0.218px;left:41.3px;">2092845912</span>
<span class="t" style="top:924.5px;line-height:15px;font-size:11px;color:#000;letter-spacing:-0.042px;right:1532.3px;">2011.03.18 18:00</span>
<span class="t" style="top:924.5px;line-height:15px;font-size:11px;color:#000;letter-spacing:0.186px;right:1426.1px;">sell</span>
<span class="t" style="top:924.5px;line-height:15px;font-size:11px;color:#000;letter-spacing:-0.043px;right:1341.3px;">0.04</span>
<span class="t" style="top:924.5px;line-height:15px;font-size:11px;color:#000;letter-spacing:0.243px;right:1235.1px;">usdchf</span>
<span class="t" style="top:924.5px;line-height:15px;font-size:11px;color:#000;letter-spacing:-0.045px;right:1129.3px;">0.90496</span>
<span class="t" style="top:924.5px;line-height:15px;font-size:11px;color:#000;letter-spacing:-0.045px;right:1023.3px;">0.90465</span>
<span class="t" style="top:924.5px;line-height:15px;font-size:11px;color:#000;letter-spacing:-0.045px;right:917.3px;">0.90236</span>
<span class="t" style="top:924.5px;line-height:15px;font-size:11px;color:#000;letter-spacing:-0.042px;right:682.3px;">2011.03.18 19:12</span>
<span class="t" style="top:924.5px;line-height:15px;font-size:11px;color:#000;letter-spacing:-0.045px;right:576.3px;">0.90236</span>
<span class="t" style="top:924.5px;line-height:15px;font-size:11px;color:#000;letter-spacing:-0.043px;right:470.3px;">0.00</span>
<span class="t" style="top:924.5px;line-height:15px;font-size:11px;color:#000;letter-spacing:-0.043px;right:353.3px;">11.53</span>
<span class="t" style="top:924.5px;line-height:15px;font-size:11px;color:#000;letter-spacing:0.251px;right:22.0px;">complete</span>
<span class="t" style="top:944.5px;line-height:15px;font-size:11px;color:#000;letter-spacing:-0.218px;left:41.3px;">2092844737</span>
<span class="t" style="top:944.5px;line-height:15px;font-size:11px;color:#000;letter-spacing:-0.042px;right:1532.3px;">2011.03.18 16:30</span>
<span class="t" style="top:944.5px;line-height:15px;font-size:11px;color:#000;letter-spacing:0.186px;right:1426.1px;">sell</span>
<span class="t" style="top:944.5px;line-height:15px;font-size:11px;color:#000;letter-spacing:-0.043px;right:1341.3px;">0.04</span>
<span class="t" style="top:944.5px;line-height:15px;font-size:11px;color:#000;letter-spacing:0.243px;right:1235.1px;">usdchf</span>
<span class="t" style="top:944.5px;line-height:15px;font-size:11px;color:#000;letter-spacing:-0.045px;right:1129.3px;">0.90384</span>
<span class="t" style="top:944.5px;line-height:15px;font-size:11px;color:#000;letter-spacing:-0.045px;right:1023.3px;">0.90338</span>
<span class="t" style="top:944.5px;line-height:15px;font-size:11px;color:#000;letter-spacing:-0.045px;right:917.3px;">0.90124</span>
<span class="t" style="top:944.5px;line-height:15px;font-size:11px;color:#000;letter-spacing:-0.042px;right:682.3px;">2011.03.18 19:45</span>
<span class="t" style="top:944.5px;line-height:15px;font-size:11px;color:#000;letter-spacing:-0.045px;right:576.3px;">0.90158</span>
<span class="t" style="top:944.5px;line-height:15px;font-size:11px;color:#000;letter-spacing:-0.043px;right:470.3px;">0.00</span>
<span class="t" style="top:944.5px;line-height:15px;font-size:11px;color:#000;letter-spacing:-0.044px;right:353.3px;">10.03</span>
<span class="t" style="top:964.5px;line-height:15px;font-size:11px;color:#000;letter-spacing:-0.218px;left:41.3px;">2092855648</span>
<span class="t" style="top:964.5px;line-height:15px;font-size:11px;color:#000;letter-spacing:-0.042px;right:1532.3px;">2011.03.21 12:00</span>
<span class="t" style="top:964.5px;line-height:15px;font-size:11px;color:#000;letter-spacing:0.266px;right:1426.0px;">buy</span>
<span class="t" style="top:964.5px;line-height:15px;font-size:11px;color:#000;letter-spacing:-0.043px;right:1341.3px;">0.04</span>
<span class="t" style="top:964.5px;line-height:15px;font-size:11px;color:#000;letter-spacing:0.252px;right:1235.0px;">eurusd</span>
<span class="t" style="top:964.5px;line-height:15px;font-size:11px;color:#000;letter-spacing:-0.045px;right:1129.3px;">1.41537</span>
<span class="t" style="top:964.5px;line-height:15px;font-size:11px;color:#000;letter-spacing:-0.045px;right:1023.3px;">1.40117</span>
<span class="t" style="top:964.5px;line-height:15px;font-size:11px;color:#000;letter-spacing:-0.045px;right:917.3px;">1.41987</span>
<span class="t" style="top:964.5px;line-height:15px;font-size:11px;color:#000;letter-spacing:-0.042px;right:682.3px;">2011.03.21 15:45</span>
<span class="t" style="top:964.5px;line-height:15px;font-size:11px;color:#000;letter-spacing:-0.045px;right:576.3px;">1.41871</span>
<span class="t" style="top:964.5px;line-height:15px;font-size:11px;color:#000;letter-spacing:-0.043px;right:470.3px;">0.00</span>
<span class="t" style="top:964.5px;line-height:15px;font-size:11px;color:#000;letter-spacing:-0.044px;right:353.3px;">13.36</span>
<span class="t" style="top:984.5px;line-height:15px;font-size:11px;color:#000;letter-spacing:-0.218px;left:41.3px;">2092880242</span>
<span class="t" style="top:984.5px;line-height:15px;font-size:11px;color:#000;letter-spacing:-0.042px;right:1532.3px;">2011.03.23 03:15</span>
<span class="t" style="top:984.5px;line-height:15px;font-size:11px;color:#000;letter-spacing:0.266px;right:1426.0px;">buy</span>
<span class="t" style="top:984.5px;line-height:15px;font-size:11px;color:#000;letter-spacing:-0.043px;right:1341.3px;">0.04</span>
<span class="t" style="top:984.5px;line-height:15px;font-size:11px;color:#000;letter-spacing:0.271px;right:1235.0px;">audusd</span>
<span class="t" style="top:984.5px;line-height:15px;font-size:11px;color:#000;letter-spacing:-0.045px;right:1129.3px;">1.00807</span>
<span class="t" style="top:984.5px;line-height:15px;font-size:11px;color:#000;letter-spacing:-0.045px;right:1023.3px;">1.00913</span>
<span class="t" style="top:984.5px;line-height:15px;font-size:11px;color:#000;letter-spacing:-0.045px;right:917.3px;">1.01137</span>
<span class="t" style="top:984.5px;line-height:15px;font-size:11px;color:#000;letter-spacing:-0.042px;right:682.3px;">2011.03.23 08:33</span>
<span class="t" style="top:984.5px;line-height:15px;font-size:11px;color:#000;letter-spacing:-0.045px;right:576.3px;">1.00912</span>
<span class="t" style="top:984.5px;line-height:15px;font-size:11px;color:#000;letter-spacing:-0.043px;right:470.3px;">0.00</span>
<span class="t" style="top:984.5px;line-height:15px;font-size:11px;color:#000;letter-spacing:-0.043px;right:353.3px;">4.20</span>
<span class="t" style="top:984.5px;line-height:15px;font-size:11px;color:#000;letter-spacing:0.251px;right:22.0px;">complete</span>
<span class="t" style="top:1004.5px;line-height:15px;font-size:11px;color:#000;letter-spacing:-0.218px;left:41.3px;">2092883577</span>
<span class="t" style="top:1004.5px;line-height:15px;font-size:11px;color:#000;letter-spacing:-0.042px;right:1532.3px;">2011.03.23 10:45</span>
<span class="t" style="top:1004.5px;line-height:15px;font-size:11px;color:#000;letter-spacing:0.266px;right:1426.0px;">buy</span>
<span class="t" style="top:1004.5px;line-height:15px;font-size:11px;color:#000;letter-spacing:-0.043px;right:1341.3px;">0.04</span>
<span class="t" style="top:1004.5px;line-height:15px;font-size:11px;color:#000;letter-spacing:0.271px;right:1235.0px;">audusd</span>
<span class="t" style="top:1004.5px;line-height:15px;font-size:11px;color:#000;letter-spacing:-0.045px;right:1129.3px;">1.00832</span>
<span class="t" style="top:1004.5px;line-height:15px;font-size:11px;color:#000;letter-spacing:-0.045px;right:1023.3px;">1.00886</span>
<span class="t" style="top:1004.5px;line-height:15px;font-size:11px;color:#000;letter-spacing:-0.045px;right:917.3px;">1.01162</span>
<span class="t" style="top:1004.5px;line-height:15px;font-size:11px;color:#000;letter-spacing:-0.042px;right:682.3px;">2011.03.23 12:36</span>
<span class="t" style="top:1004.5px;line-height:15px;font-size:11px;color:#000;letter-spacing:-0.045px;right:576.3px;">1.01162</span>
<span class="t" style="top:1004.5px;line-height:15px;font-size:11px;color:#000;letter-spacing:-0.043px;right:470.3px;">0.00</span>
<span class="t" style="top:1004.5px;line-height:15px;font-size:11px;color:#000;letter-spacing:-0.044px;right:353.3px;">13.20</span>
<span class="t" style="top:1004.5px;line-height:15px;font-size:11px;color:#000;letter-spacing:0.251px;right:22.0px;">complete</span>
<span class="t" style="top:1024.5px;line-height:15px;font-size:11px;color:#000;letter-spacing:-0.218px;left:41.3px;">2092872957</span>
<span class="t" style="top:1024.5px;line-height:15px;font-size:11px;color:#000;letter-spacing:-0.042px;right:1532.3px;">2011.03.22 16:00</span>
<span class="t" style="top:1024.5px;line-height:15px;font-size:11px;color:#000;letter-spacing:0.266px;right:1426.0px;">buy</span>
<span class="t" style="top:1024.5px;line-height:15px;font-size:11px;color:#000;letter-spacing:-0.043px;right:1341.3px;">0.04</span>
<span class="t" style="top:1024.5px;line-height:15px;font-size:11px;color:#000;letter-spacing:0.252px;right:1235.0px;">eurusd</span>
<span class="t" style="top:1024.5px;line-height:15px;font-size:11px;color:#000;letter-spacing:-0.045px;right:1129.3px;">1.42136</span>
<span class="t" style="top:1024.5px;line-height:15px;font-size:11px;color:#000;letter-spacing:-0.045px;right:1023.3px;">1.40716</span>
<span class="t" style="top:1024.5px;line-height:15px;font-size:11px;color:#000;letter-spacing:-0.045px;right:917.3px;">1.42586</span>
<span class="t" style="top:1024.5px;line-height:15px;font-size:11px;color:#000;letter-spacing:-0.042px;right:682.3px;">2011.03.23 13:30</span>
<span class="t" style="top:1024.5px;line-height:15px;font-size:11px;color:#000;letter-spacing:-0.045px;right:576.3px;">1.42090</span>
<span class="t" style="top:1024.5px;line-height:15px;font-size:11px;color:#000;letter-spacing:-0.043px;right:470.3px;">0.02</span>
<span class="t" style="top:1024.5px;line-height:15px;font-size:11px;color:#000;letter-spacing:-0.040px;right:353.3px;">-1.84</span>
<span class="t" style="top:1044.5px;line-height:15px;font-size:11px;color:#000;letter-spacing:-0.218px;left:41.3px;">2092873626</span>
<span class="t" style="top:1044.5px;line-height:15px;font-size:11px;color:#000;letter-spacing:-0.042px;right:1532.3px;">2011.03.22 16:45</span>
<span class="t" style="top:1044.5px;line-height:15px;font-size:11px;color:#000;letter-spacing:0.266px;right:1426.0px;">buy</span>
<span class="t" style="top:1044.5px;line-height:15px;font-size:11px;color:#000;letter-spacing:-0.043px;right:1341.3px;">0.04</span>
<span class="t" style="top:1044.5px;line-height:15px;font-size:11px;color:#000;letter-spacing:0.252px;right:1235.0px;">eurusd</span>
<span class="t" style="top:1044.5px;line-height:15px;font-size:11px;color:#000;letter-spacing:-0.045px;right:1129.3px;">1.42037</span>
<span class="t" style="top:1044.5px;line-height:15px;font-size:11px;color:#000;letter-spacing:-0.045px;right:1023.3px;">1.40617</span>
<span class="t" style="top:1044.5px;line-height:15px;font-size:11px;color:#000;letter-spacing:-0.045px;right:917.3px;">1.42487</span>
<span class="t" style="top:1044.5px;line-height:15px;font-size:11px;color:#000;letter-spacing:-0.042px;right:682.3px;">2011.03.23 13:45</span>
<span class="t" style="top:1044.5px;line-height:15px;font-size:11px;color:#000;letter-spacing:-0.045px;right:576.3px;">1.42047</span>
<span class="t" style="top:1044.5px;line-height:15px;font-size:11px;color:#000;letter-spacing:-0.043px;right:470.3px;">0.02</span>
<span class="t" style="top:1044.5px;line-height:15px;font-size:11px;color:#000;letter-spacing:-0.043px;right:353.3px;">0.40</span>
<span class="t" style="top:1064.5px;line-height:15px;font-size:11px;color:#000;letter-spacing:-0.218px;left:41.3px;">2093079230</span>
<span class="t" style="top:1064.5px;line-height:15px;font-size:11px;color:#000;letter-spacing:-0.042px;right:1532.3px;">2011.04.07 10:15</span>
<span class="t" style="top:1064.5px;line-height:15px;font-size:11px;color:#000;letter-spacing:0.266px;right:1426.0px;">buy</span>
<span class="t" style="top:1064.5px;line-height:15px;font-size:11px;color:#000;letter-spacing:-0.043px;right:1341.3px;">0.16</span>
<span class="t" style="top:1064.5px;line-height:15px;font-size:11px;color:#000;letter-spacing:0.252px;right:1235.0px;">eurusd</span>
<span class="t" style="top:1064.5px;line-height:15px;font-size:11px;color:#000;letter-spacing:-0.045px;right:1129.3px;">1.42868</span>
<span class="t" style="top:1064.5px;line-height:15px;font-size:11px;color:#000;letter-spacing:-0.045px;right:1023.3px;">1.42903</span>
<span class="t" style="top:1064.5px;line-height:15px;font-size:11px;color:#000;letter-spacing:-0.045px;right:917.3px;">1.43268</span>
<span class="t" style="top:1064.5px;line-height:15px;font-size:11px;color:#000;letter-spacing:-0.042px;right:682.3px;">2011.04.07 15:45</span>
<span class="t" style="top:1064.5px;line-height:15px;font-size:11px;color:#000;letter-spacing:-0.045px;right:576.3px;">1.43003</span>
<span class="t" style="top:1064.5px;line-height:15px;font-size:11px;color:#000;letter-spacing:-0.043px;right:470.3px;">0.00</span>
<span class="t" style="top:1064.5px;line-height:15px;font-size:11px;color:#000;letter-spacing:-0.044px;right:353.3px;">21.60</span>
<span class="t" style="top:1064.5px;line-height:15px;font-size:11px;color:#000;letter-spacing:0.319px;right:22.0px;">EURUSD MACCIMO BUY MACCIMO</span>
<svg style="left:18px;top:905px" width="16" height="16" viewBox="0 0 16 16"><path d="M1.5 .5h7l3 3v10.500h-10z" fill="#fff" stroke="#4a4a4a"/><path d="M8.500 .5v3h3" fill="none" stroke="#4a4a4a"/><circle cx="10.500" cy="11.500" r="3.300" fill="#e8481c" stroke="#b02c08" stroke-width=".8"/></svg>
<svg style="left:18px;top:925px" width="16" height="16" viewBox="0 0 16 16"><path d="M1.5 .5h7l3 3v10.500h-10z" fill="#fff" stroke="#4a4a4a"/><path d="M8.500 .5v3h3" fill="none" stroke="#4a4a4a"/><circle cx="10.500" cy="11.500" r="3.300" fill="#e8481c" stroke="#b02c08" stroke-width=".8"/></svg>
<svg style="left:18px;top:945px" width="16" height="16" viewBox="0 0 16 16"><path d="M1.5 .5h7l3 3v10.500h-10z" fill="#fff" stroke="#4a4a4a"/><path d="M8.500 .5v3h3" fill="none" stroke="#4a4a4a"/><circle cx="10.500" cy="11.500" r="3.300" fill="#e8481c" stroke="#b02c08" stroke-width=".8"/></svg>
<svg style="left:18px;top:965px" width="16" height="16" viewBox="0 0 16 16"><path d="M1.5 .5h7l3 3v10.500h-10z" fill="#fff" stroke="#4a4a4a"/><path d="M8.500 .5v3h3" fill="none" stroke="#4a4a4a"/><circle cx="10.500" cy="11.500" r="3.300" fill="#2a8fe0" stroke="#1565b0" stroke-width=".8"/></svg>
<svg style="left:18px;top:985px" width="16" height="16" viewBox="0 0 16 16"><path d="M1.5 .5h7l3 3v10.500h-10z" fill="#fff" stroke="#4a4a4a"/><path d="M8.500 .5v3h3" fill="none" stroke="#4a4a4a"/><circle cx="10.500" cy="11.500" r="3.300" fill="#2a8fe0" stroke="#1565b0" stroke-width=".8"/></svg>
<svg style="left:18px;top:1005px" width="16" height="16" viewBox="0 0 16 16"><path d="M1.5 .5h7l3 3v10.500h-10z" fill="#fff" stroke="#4a4a4a"/><path d="M8.500 .5v3h3" fill="none" stroke="#4a4a4a"/><circle cx="10.500" cy="11.500" r="3.300" fill="#2a8fe0" stroke="#1565b0" stroke-width=".8"/></svg>
<svg style="left:18px;top:1025px" width="16" height="16" viewBox="0 0 16 16"><path d="M1.5 .5h7l3 3v10.500h-10z" fill="#fff" stroke="#4a4a4a"/><path d="M8.500 .5v3h3" fill="none" stroke="#4a4a4a"/><circle cx="10.500" cy="11.500" r="3.300" fill="#2a8fe0" stroke="#1565b0" stroke-width=".8"/></svg>
<svg style="left:18px;top:1045px" width="16" height="16" viewBox="0 0 16 16"><path d="M1.5 .5h7l3 3v10.500h-10z" fill="#fff" stroke="#4a4a4a"/><path d="M8.500 .5v3h3" fill="none" stroke="#4a4a4a"/><circle cx="10.500" cy="11.500" r="3.300" fill="#2a8fe0" stroke="#1565b0" stroke-width=".8"/></svg>
<svg style="left:18px;top:1065px" width="16" height="16" viewBox="0 0 16 16"><path d="M1.5 .5h7l3 3v10.500h-10z" fill="#fff" stroke="#4a4a4a"/><path d="M8.500 .5v3h3" fill="none" stroke="#4a4a4a"/><circle cx="10.500" cy="11.500" r="3.300" fill="#2a8fe0" stroke="#1565b0" stroke-width=".8"/></svg>
<div class="r" style="left:16px;top:1082px;width:1883px;height:20px;background:#c8c8c8;"></div>
<svg style="left:21px;top:1087px" width="10" height="10" viewBox="0 0 10 10"><circle cx="5" cy="5" r="3.600" fill="#cfcfcf" stroke="#8a8a8a"/></svg>
<span class="t" style="top:1084.5px;line-height:15px;font-size:11px;color:#000;font-weight:bold;letter-spacing:-0.074px;left:41.3px;">Profit/Perte: 1 425.53  Crédit: 0.00  Dépôt : 3 000.00  Retrait : 0.00</span>
<span class="t" style="top:1084.5px;line-height:15px;font-size:11px;color:#000;font-weight:bold;letter-spacing:-0.043px;right:353.5px;">4 425.53</span>
<div class="r" style="left:1899px;top:878px;width:17px;height:237px;background:#f0f0f0;"></div>
<svg style="left:1905px;top:885px" width="7" height="4" viewBox="0 0 7 4"><path d="M0 4l3.500-4l3.500 4z" fill="#404040"/></svg>
<svg style="left:1905px;top:1105px" width="7" height="4" viewBox="0 0 7 4"><path d="M0 0l3.500 4l3.500-4z" fill="#404040"/></svg>
<div class="r" style="left:1900px;top:1082px;width:15px;height:15px;box-sizing:border-box;border:1px solid #979797;border-radius:2px;background:linear-gradient(90deg,#f5f5f5,#e1e1e1);"></div>
<div class="r" style="left:15px;top:1115px;width:1902px;height:1px;background:#000;"></div>
<div class="r" style="left:0px;top:1116px;width:1918px;height:13px;background:#f0f0f0;"></div>
<div class="r" style="left:74px;top:1115px;width:122px;height:20px;box-sizing:border-box;background:#fff;border:1px solid #000;border-top:none;border-right-width:2px;"></div>
<div class="r" style="left:1px;top:891px;width:13px;height:238px;background:#d3dfef;"></div>
<span class="t" style="left:-18px;top:1105px;width:50px;height:14px;line-height:14px;font-size:12px;color:#4a5868;transform:rotate(-90deg);transform-origin:center;text-align:center;">Terminal</span>
<span class="t" style="top:1118.0px;line-height:15px;font-size:11px;color:#6d6d6d;letter-spacing:-0.127px;left:27.0px;">Trading</span>
<span class="t" style="top:1117.0px;line-height:15px;font-size:11px;color:#000;letter-spacing:-0.147px;left:83.0px;">Historique du compte</span>
<span class="t" style="top:1118.0px;line-height:15px;font-size:11px;color:#6d6d6d;letter-spacing:-0.256px;left:204.0px;">Nouvelles</span>
<span class="t" style="top:1118.0px;line-height:15px;font-size:11px;color:#6d6d6d;letter-spacing:-0.177px;left:274.0px;">Alertes</span>
<span class="t" style="top:1118.0px;line-height:15px;font-size:11px;color:#6d6d6d;letter-spacing:-0.286px;left:327.0px;">Messagerie</span>
<span class="t" style="top:1118.0px;line-height:15px;font-size:11px;color:#6d6d6d;letter-spacing:-0.042px;left:401.0px;">Experts</span>
<span class="t" style="top:1118.0px;line-height:15px;font-size:11px;color:#6d6d6d;letter-spacing:-0.297px;left:459.0px;">Journal</span>
<div class="r" style="left:264px;top:1119px;width:1px;height:10px;background:#6d6d6d;"></div>
<div class="r" style="left:317px;top:1119px;width:1px;height:10px;background:#6d6d6d;"></div>
<div class="r" style="left:392px;top:1119px;width:1px;height:10px;background:#6d6d6d;"></div>
<div class="r" style="left:449px;top:1119px;width:1px;height:10px;background:#6d6d6d;"></div>
<div class="r" style="left:504px;top:1119px;width:1px;height:10px;background:#6d6d6d;"></div>
<svg style="left:10px;top:48px" width="20" height="18" viewBox="0 0 20 18"><rect x="1.500" y="1.500" width="12" height="10" rx="1" fill="#fff" stroke="#3b78c0"/><rect x="2" y="2" width="11" height="2" fill="#7fb0e6"/><path d="M4.500 5v5M3 6.500l1.500-1.500 1.500 1.500M3 8.500l1.500 1.500 1.500-1.500" stroke="#7a98b8" fill="none"/><g transform="translate(6.500,4.500) scale(.92)"><path d="M4 0h4v4h4v4h-4v4h-4v-4h-4v-4h4z" fill="#22cc22" stroke="#0c8a0c" stroke-width="1"/><path d="M5 1h2v4h-2zM1 5h4v1h-4z" fill="#8af08a"/></g></svg>
<svg style="left:47px;top:48px" width="20" height="18" viewBox="0 0 20 18"><rect x="4.500" y="6.500" width="13" height="10" rx="1" fill="#fff" stroke="#3b78c0"/><path d="M7 13.500h8M7 13.500l1.500-1.500M7 13.500l1.500 1.500M15 13.500l-1.500-1.500M15 13.500l-1.500 1.500" stroke="#7a98b8" fill="none"/><rect x="1.500" y="1.500" width="13" height="10" rx="1" fill="#fff" stroke="#3b78c0"/><rect x="2" y="2" width="12" height="2" fill="#7fb0e6"/><path d="M4.500 5v4.500h8M3 6.500l1.500-1.500 1.500 1.500M11 8l1.500 1.500-1.500 1.500" stroke="#7a98b8" fill="none"/></svg>
<svg style="left:91px;top:48px" width="18" height="18" viewBox="0 0 18 18"><rect x="1.500" y="1.500" width="15" height="15" rx="1.500" fill="#fff" stroke="#5b9bd5"/><rect x="2" y="2" width="14" height="1.500" fill="#a9cdf0"/><path d="M3 12.500h5M3 14.500h9M10 5.500h5M12 7.500h3" stroke="#d8d8d8"/><path d="M6.500 3.500l3.500 3.500h-2v3h-3v-3h-2z" fill="#2fb52f" stroke="#16861a" stroke-width=".7"/><path d="M10.500 14.500l-3.500-3.500h2v-3h3v3h2z" fill="#f06a3c" stroke="#c03c10" stroke-width=".7"/></svg>
<svg style="left:120px;top:49px" width="18" height="18" viewBox="0 0 18 18"><circle cx="8.500" cy="8.500" r="5" fill="none" stroke="#555" stroke-width="1.300"/><path d="M8.500 .5v6M8.500 10.500v6M.5 8.500h6M10.500 8.500h6" stroke="#555" stroke-width="1.300"/></svg>
<svg style="left:146px;top:48px" width="22" height="19" viewBox="0 0 22 19"><path d="M1.500 3.500q0-2 2-2h3q1.500 0 2 2h3.500q1 0 1 1v6.500h-11.500z" fill="#f6d65c" stroke="#c89a1c"/><path d="M2 6h10.500v5h-10.500z" fill="#fbe68e"/><path d="M5.500 12v6" stroke="#222" stroke-dasharray="1 1.500"/><path d="M13.500 5.500l1.900 3.900 4.300.6-3.100 3 .7 4.300-3.800-2-3.800 2 .7-4.300-3.100-3 4.300-.6z" fill="#f5d442" stroke="#b8860b" stroke-width=".9"/><path d="M13.500 7.500l1.200 2.600 2.600.4-1.900 1.800-3.800.3-1.400-2.100 2.400-.4z" fill="#fbec8e"/></svg>
<svg style="left:175px;top:49px" width="18" height="16" viewBox="0 0 18 16"><rect x="1.500" y="1.500" width="15" height="13" rx="1.500" fill="#fff" stroke="#2f74c6" stroke-width="1.300"/><rect x="2" y="2" width="3.500" height="12" fill="#5b9be0"/><rect x="2.800" y="9" width="1.500" height="4.500" fill="#333"/><circle cx="3.600" cy="3.800" r=".9" fill="#111"/><path d="M6 3.500h10M6 5.500h10M6 7.500h10M6 9.500h10" stroke="#c6d6f4"/><circle cx="7" cy="3.500" r=".8" fill="#e22"/><circle cx="7" cy="5.500" r=".8" fill="#242"/><circle cx="7" cy="7.500" r=".8" fill="#242"/><circle cx="7" cy="9.500" r=".8" fill="#e22"/></svg>
<svg style="left:203px;top:48px" width="22" height="20" viewBox="0 0 22 20"><rect x="1.500" y="1.500" width="12" height="13" rx="1" fill="#fbfaf5" stroke="#b9b199"/><path d="M4.500 3v8M10.500 3v6M3 6.500h3M9 4.500h3" stroke="#7a8290"/><circle cx="9.500" cy="10" r="5" fill="rgba(200,228,250,.85)" stroke="#4b8fd8" stroke-width="1.300"/><rect x="7.500" y="7" width="3" height="5.500" fill="#a9b6c6"/><path d="M13.300 13.800l5 4.200" stroke="#c89a1c" stroke-width="2.600" stroke-linecap="round"/><path d="M13.600 13.500l4.600 3.900" stroke="#f0d060" stroke-width="1" stroke-linecap="round"/></svg>
<svg style="left:238px;top:48px" width="20" height="20" viewBox="0 0 20 20"><path d="M1.500 1.500h8l3 3v10h-11z" fill="#fafafa" stroke="#c4c4c4"/><path d="M3 4.500h4M3 7.500h7M3 9.500h6M3 11.500h5" stroke="#d0d0d0"/><path d="M10 8h4v4h4v4h-4v4h-4v-4h-4v-4h4z" fill="#bdbdbd" stroke="#9c9c9c" stroke-width=".8" transform="translate(-1,-1.500)"/></svg>
<svg style="left:337px;top:48px" width="18" height="18" viewBox="0 0 18 18"><path d="M9 1l8 8-8 8-8-8z" fill="#f4c92a" stroke="#c8940c" stroke-linejoin="round"/><path d="M9 2.800l5.500 5.500h-11z" fill="#fbe37a"/><path d="M9 4.500v6" stroke="#5a3c0a" stroke-width="2" stroke-linecap="round"/><circle cx="9" cy="13" r="1.200" fill="#5a3c0a"/></svg>
<svg style="left:365px;top:48px" width="20" height="18" viewBox="0 0 20 18"><path d="M3.500 7.500q1 6 5.500 6.500q4.500-.5 5.500-6.500z" fill="#f6d24a" stroke="#c89a1c" stroke-width=".8"/><ellipse cx="9" cy="6.200" rx="8" ry="2.800" fill="#4a9fe0" stroke="#2a78b8" stroke-width=".7"/><path d="M5 5.500q0-4.500 4-4.500t4 4.500q-4 1.500-8 0z" fill="#6ab6ee" stroke="#2a78b8" stroke-width=".7"/><circle cx="14" cy="12.500" r="4" fill="#22b022" stroke="#0c7a0c" stroke-width=".8"/><path d="M12.700 10.300l3.500 2.200-3.500 2.200z" fill="#fff"/></svg>
<svg style="left:728px;top:49px" width="17" height="17" viewBox="0 0 17 17"><path d="M3.500 2v14M1 13.500h14" stroke="#555" stroke-width="1" fill="none"/><path d="M2 4l1.500-2 1.500 2M13 12l2 1.500-2 1.500" stroke="#555" stroke-width="1" fill="none"/><path d="M10.500 3.500v8M10.500 4h2.500M8 10.500h2.500" stroke="#1e9a2e" stroke-width="1.600" fill="none"/></svg>
<svg style="left:756px;top:49px" width="17" height="17" viewBox="0 0 17 17"><path d="M3.500 2v14M1 13.500h14" stroke="#555" stroke-width="1" fill="none"/><path d="M2 4l1.500-2 1.500 2M13 12l2 1.500-2 1.500" stroke="#555" stroke-width="1" fill="none"/><path d="M10.500 0v13" stroke="#0c8a1c" stroke-width="1.200"/><rect x="8" y="2.500" width="5" height="8" rx=".8" fill="#2fd040" stroke="#0c8a1c"/></svg>
<svg style="left:784px;top:49px" width="17" height="17" viewBox="0 0 17 17"><path d="M3.500 2v14M1 13.500h14" stroke="#555" stroke-width="1" fill="none"/><path d="M2 4l1.500-2 1.500 2M13 12l2 1.500-2 1.500" stroke="#555" stroke-width="1" fill="none"/><path d="M2.500 10.500q4-8 7-6.500t5 4" stroke="#1e9a2e" stroke-width="1.300" fill="none"/></svg>
<svg style="left:816px;top:48px" width="19" height="19" viewBox="0 0 19 19"><circle cx="6.800" cy="6.800" r="5.500" fill="#d6ebfb" stroke="#2f7ed0" stroke-width="1.400"/><path d="M3.800 6.800h6" stroke="#2f7ed0" stroke-width="1.800"/><path d="M6.800 3.800v6" stroke="#2f7ed0" stroke-width="1.800"/><path d="M11.200 11.200l4.800 4.600" stroke="#c09a20" stroke-width="2.800" stroke-linecap="round"/><path d="M11.400 10.900l4.600 4.400" stroke="#f2dc70" stroke-width="1" stroke-linecap="round"/></svg>
<svg style="left:844px;top:48px" width="19" height="19" viewBox="0 0 19 19"><circle cx="6.800" cy="6.800" r="5.500" fill="#d6ebfb" stroke="#2f7ed0" stroke-width="1.400"/><path d="M3.800 6.800h6" stroke="#2f7ed0" stroke-width="1.800"/><path d="M11.200 11.200l4.800 4.600" stroke="#c09a20" stroke-width="2.800" stroke-linecap="round"/><path d="M11.400 10.900l4.600 4.400" stroke="#f2dc70" stroke-width="1" stroke-linecap="round"/></svg>
<svg style="left:880px;top:49px" width="17" height="17" viewBox="0 0 17 17"><path d="M3.500 2v14M1 13.500h14" stroke="#555" stroke-width="1" fill="none"/><path d="M2 4l1.500-2 1.500 2M13 12l2 1.500-2 1.500" stroke="#555" stroke-width="1" fill="none"/><path d="M8 3.500l4.500 3.500-4.500 3.500z" fill="#3ecf4a" stroke="#0c8a1c" stroke-width="1"/></svg>
<svg style="left:908px;top:49px" width="17" height="17" viewBox="0 0 17 17"><path d="M3.500 2v14M1 13.500h14" stroke="#555" stroke-width="1" fill="none"/><path d="M2 4l1.500-2 1.500 2M13 12l2 1.500-2 1.500" stroke="#555" stroke-width="1" fill="none"/><path d="M9.500 2v10" stroke="#1e6eb8" stroke-width="1.400"/><path d="M10.500 7.500h5M10.500 7.500l2.800-2.500M10.500 7.500l2.800 2.500" stroke="#d8481c" stroke-width="1.400" fill="none"/></svg>
<svg style="left:941px;top:48px" width="20" height="20" viewBox="0 0 20 20"><path d="M1.500 1.500h8l3 3v10h-11z" fill="#fafafa" stroke="#9a9a9a"/><path d="M9.500 1.500v3h3" fill="none" stroke="#9a9a9a"/><path d="M4 12q.5-8 3.500-8M3 7.500h4" stroke="#444" fill="none"/><g transform="translate(5.500,7) scale(.92)"><path d="M4 0h4v4h4v4h-4v4h-4v-4h-4v-4h4z" fill="#22cc22" stroke="#0c8a0c" stroke-width="1"/><path d="M5 1h2v4h-2zM1 5h4v1h-4z" fill="#8af08a"/></g></svg>
<svg style="left:977px;top:48px" width="18" height="18" viewBox="0 0 18 18"><circle cx="9" cy="9" r="7.300" fill="#fff" stroke="#1f6fd0" stroke-width="2.200"/><circle cx="9" cy="9" r="8.200" fill="none" stroke="#0c4a9a" stroke-width=".6"/><path d="M9 4.500v4.500h3.500" stroke="#444" stroke-width="1.300" fill="none"/><path d="M9 3v1M9 14v1M3 9h1M14 9h1" stroke="#8ab" stroke-width="1"/></svg>
<svg style="left:1014px;top:49px" width="18" height="16" viewBox="0 0 18 16"><rect x="1.500" y="1.500" width="15" height="13" fill="#fff" stroke="#2f6fc0" stroke-width="1.300"/><rect x="2" y="2" width="14" height="2.200" fill="#5b9be0"/><path d="M2 9.500h14" stroke="#2f6fc0" stroke-width="1.200"/><path d="M3.500 7.500l3-1.200 2.500.7 3-1.500 2.500.3" stroke="#a82c14" stroke-width="1.300" fill="none"/><path d="M3.500 12.800l3-1.300 2 .9 2.500-1.800 3 1.900" stroke="#1e9a2e" stroke-width="1.300" fill="none"/></svg>
<svg style="left:15px;top:76px" width="11" height="16" viewBox="0 0 11 16"><path d="M1.500 1v12l3-2.800 2.200 5 2-.9-2.200-4.900h4z" fill="#444"/></svg>
<svg style="left:40px;top:76px" width="18" height="18" viewBox="0 0 18 18"><path d="M8.500 1v6M8.500 10v6M1 8.500h6M10 8.500h6" stroke="#444" stroke-width="1.200"/><rect x="8" y="8" width="1" height="1" fill="#888"/></svg>
<div class="r" style="left:82px;top:78px;width:1px;height:14px;background:#444;"></div>
<div class="r" style="left:105px;top:84px;width:13px;height:1px;background:#444;"></div>
<svg style="left:131px;top:77px" width="16" height="16" viewBox="0 0 16 16"><path d="M2 14L14 2" stroke="#444" stroke-width="1.300"/></svg>
<svg style="left:157px;top:75px" width="20" height="20" viewBox="0 0 20 20"><path d="M1 13L11 3M4 15.500L14 5.500M2.500 14.200L12.500 4.200" stroke="#444" stroke-width="1.100"/><path d="M5 6v7M8 4v8M11 2v8" stroke="#444" stroke-width="1"/><path d="M14 13h3.500M14 15.500h3M14 18h3.500M14.500 13v5" stroke="#333" stroke-width="1.200" fill="none"/></svg>
<svg style="left:187px;top:75px" width="18" height="20" viewBox="0 0 18 20"><path d="M1 2.500h13M1 5.500h13M1 9.500h13M1 13.500h9" stroke="#444" stroke-dasharray="1 1"/><path d="M11.500 13v5.500M11.500 13.500h3.500M11.500 16h3" stroke="#333" stroke-width="1.300" fill="none"/></svg>
<span class="t" style="top:76.0px;line-height:17px;font-size:13px;color:#444;letter-spacing:-0.671px;left:219.0px;">A</span>
<svg style="left:244px;top:77px" width="15" height="15" viewBox="0 0 15 15"><rect x="1.500" y="1.500" width="12" height="12" fill="none" stroke="#444" stroke-dasharray="1 1" shape-rendering="crispEdges"/><path d="M4 4.500h7M7.500 4.500v7" stroke="#444" stroke-width="1.800"/></svg>
<svg style="left:271px;top:77px" width="17" height="16" viewBox="0 0 17 16"><path d="M5 .5l3 3-3 3-3-3z" fill="#444"/><path d="M12 7.500l3 3-3 3-3-3z" fill="#444"/><path d="M4 9.500l2 2 5-6" stroke="#444" stroke-width="1.300" fill="none"/></svg>
<svg style="left:9px;top:115px" width="17" height="17" viewBox="0 0 17 17"><rect x="1.500" y="1.500" width="11" height="8" fill="#fff" stroke="#5ea6e8" stroke-width="1.200"/><path d="M3 5l2-1.500 1.500 1.500 2-1.500" stroke="#5a7ae0" fill="none" stroke-width=".9"/><rect x="4.500" y="6.500" width="10" height="8" fill="#fff" stroke="#5ea6e8" stroke-width="1.200"/><path d="M6 9.500l1.500 3 1.500-3 1.500 3 1.500-3" stroke="#4a62e0" fill="none" stroke-width=".9"/></svg>
<svg style="left:28px;top:132px" width="20" height="18" viewBox="0 0 20 18"><g transform="translate(0,0)"><path d="M.5 15q-.5-5.500 3.500-7h4q4 1.500 3.500 7q-5.500 1.500-11 0z" fill="#2fd02f" stroke="#0c8a0c" stroke-width=".8"/><ellipse cx="6" cy="4.200" rx="3.400" ry="3.800" fill="#f6a820" stroke="#a07808" stroke-width=".8"/></g><g transform="translate(6,0.5)"><path d="M.5 15q-.5-5.500 3.500-7h4q4 1.500 3.500 7q-5.500 1.500-11 0z" fill="#e8c830" stroke="#a88a10" stroke-width=".8"/><ellipse cx="6" cy="4.200" rx="3.400" ry="3.800" fill="#f0d040" stroke="#a88a10" stroke-width=".8"/></g><path d="M10 8.5l4.500 6 1.500-5z" fill="#fdf6c8"/></svg>
<svg style="left:52px;top:151px" width="14" height="17" viewBox="0 0 14 17"><g transform="translate(0.5,0.5)"><path d="M.5 15q-.5-5.500 3.500-7h4q4 1.500 3.500 7q-5.500 1.500-11 0z" fill="#e8c830" stroke="#a88a10" stroke-width=".8"/><ellipse cx="6" cy="4.200" rx="3.400" ry="3.800" fill="#f0d040" stroke="#a88a10" stroke-width=".8"/></g><path d="M4.5 8.5l4.500 6 1.500-5z" fill="#fdf6c8"/></svg>
<svg width="0" height="0" style="left:0;top:0"><defs><linearGradient id="fg" x1="0" y1="0" x2="0" y2="1"><stop offset="0" stop-color="#fff4a8"/><stop offset=".5" stop-color="#fae57c"/><stop offset="1" stop-color="#efc840"/></linearGradient></defs></svg>
<svg style="left:31px;top:170px" width="16" height="16" viewBox="0 0 16 16"><rect x=".5" y=".5" width="14" height="14" rx="2" fill="url(#fg)" stroke="#d2a82c"/><path d="M4.500 11.500q2 .5 2.800-2.500l1.200-4q.8-2.200 2.500-1.500M5.500 7h4.500" stroke="#9a7a10" stroke-width="1.300" fill="none"/></svg>
<svg style="left:29px;top:187px" width="20" height="18" viewBox="0 0 20 18"><path d="M5 7.500q.5 4.500 4.500 5q3.500-.5 4.500-5z" fill="#f6d24a" stroke="#c89a1c" stroke-width=".8"/><ellipse cx="9" cy="6" rx="8.300" ry="3" fill="#4a9fe0" stroke="#2a78b8" stroke-width=".7"/><path d="M5 5q0-4 4-4t4.500 4q-4 1.500-8.500 0z" fill="#6ab6ee" stroke="#2a78b8" stroke-width=".7"/><path d="M13 10.0l3.500 3.500-3.500 3.500-3.500-3.500z" fill="#f6da5a" stroke="#b8900c" stroke-width=".9"/></svg>
<svg style="left:31px;top:206px" width="18" height="18" viewBox="0 0 18 18"><rect x=".5" y=".5" width="14" height="14" rx="2" fill="url(#fg)" stroke="#d2a82c"/><path d="M4.500 11.500q2 .5 2.800-2.500l1.200-4q.8-2.200 2.500-1.500M5.500 7h4.500" stroke="#9a7a10" stroke-width="1.300" fill="none"/><path d="M12 8.5l3.500 3.500-3.500 3.500-3.500-3.500z" fill="#f6da5a" stroke="#b8900c" stroke-width=".9"/></svg>
<svg style="left:31px;top:223px" width="18" height="18" viewBox="0 0 18 18"><path d="M2 1.500h10l-1.500 2v7l1.500 2h-11l1.500-2v-7z" fill="#f8e078" stroke="#c89a1c" stroke-width=".9"/><path d="M4.500 4.500h1M7.500 4.500h1M4.500 6.500h1M7.500 6.500h1" stroke="#a88a30"/><path d="M12 9.5l3.500 3.500-3.500 3.500-3.500-3.500z" fill="#f6da5a" stroke="#b8900c" stroke-width=".9"/></svg>
</body></html>
